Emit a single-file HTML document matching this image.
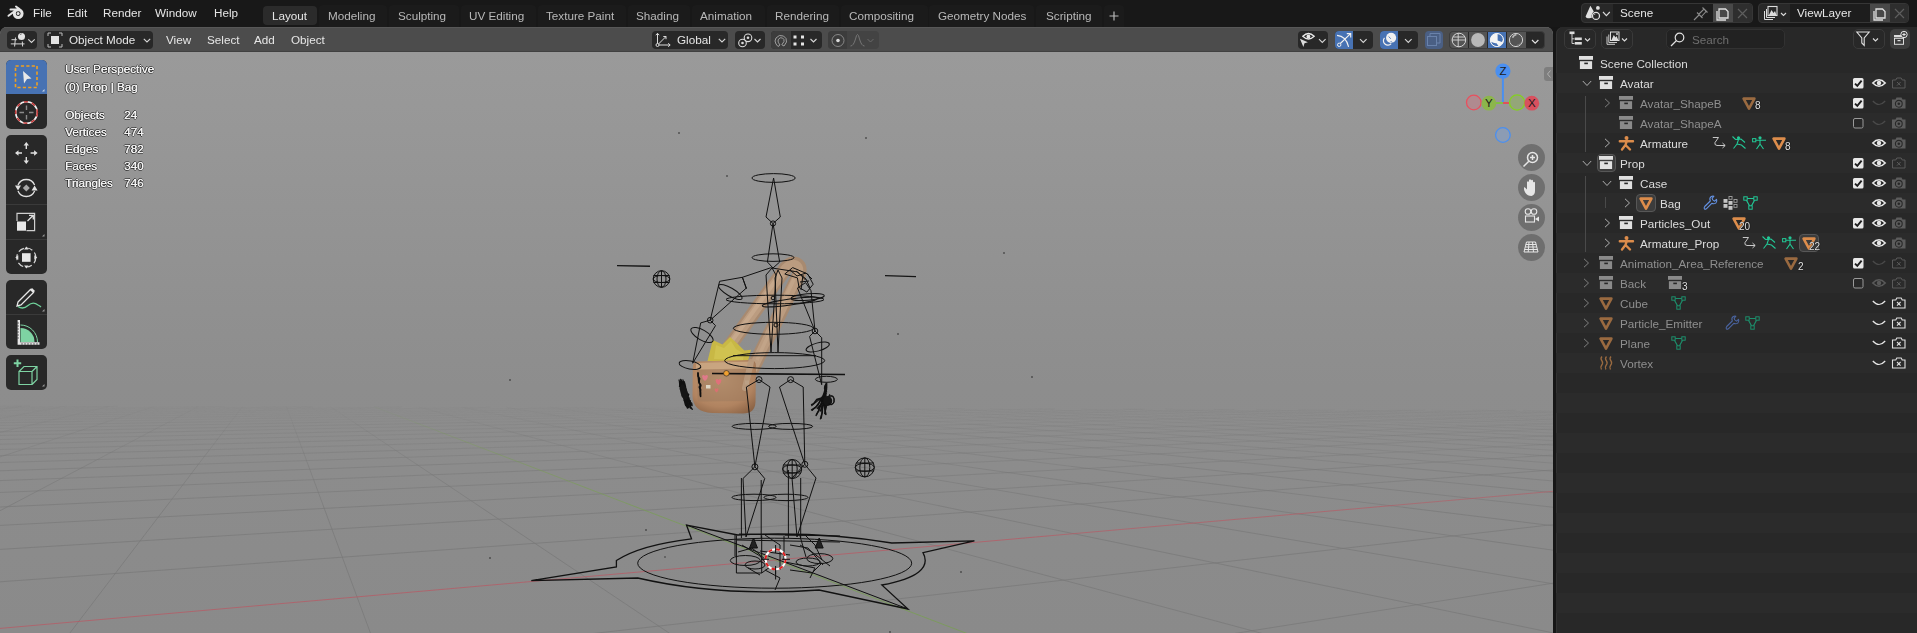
<!DOCTYPE html>
<html><head><meta charset="utf-8">
<style>
*{margin:0;padding:0;box-sizing:border-box}
html,body{width:1917px;height:633px;overflow:hidden;background:#161616;-webkit-font-smoothing:antialiased;font-family:"Liberation Sans",sans-serif;font-size:11.7px;color:#e6e6e6}
.a{position:absolute}
.t{position:absolute;white-space:nowrap;line-height:14px}
svg{position:absolute;overflow:visible}
#vp{position:absolute;left:0;top:27px;width:1553px;height:606px;border-radius:7px 7px 0 0;overflow:hidden;background:linear-gradient(#9b9b9b 0px,#8d8d8d 360px,#8a8a8a 606px)}
#vph{position:absolute;left:0;top:0;width:1553px;height:25px;background:#4c4c4c;border-top:1px solid #575757;border-bottom:1px solid #414141}
#ol{position:absolute;left:1556px;top:27px;width:361px;height:606px;border-radius:7px 0 0 0;overflow:hidden;background:#282828;box-shadow:inset 1px 0 #323232}
.dd{position:absolute;background:#282828;border-radius:4px;height:18px;top:4px}
.tab{position:absolute;top:5px;height:22px;border-radius:4px 4px 0 0;background:#1b1b1b}
.menu{color:#e6e6e6}
.tabt{color:#b8b8b8}
.row{position:absolute;left:0;width:361px;height:20px}
.ot{position:absolute;white-space:nowrap;line-height:14px;color:#dcdcdc}
.dim{color:#8f8f8f}
.vt{position:absolute;white-space:nowrap;line-height:14px;color:#f4f4f4;text-shadow:0.45px 0 .2px #f4f4f4,1px 0 .6px rgba(10,10,10,.6),-1px 0 .6px rgba(10,10,10,.6),0 1px .6px rgba(10,10,10,.6),0 -1px .6px rgba(10,10,10,.6)}
.tb{position:absolute;left:6px;width:41px;background:#282828;border-radius:5px;overflow:hidden}
.nav{position:absolute;left:1517.5px;width:27px;height:27px;border-radius:14px;background:rgba(80,80,80,.55)}
.t,.ot,.vt{will-change:transform}
</style></head><body>
<!-- TOP BAR -->
<div class="a" style="left:0;top:0;width:1917px;height:27px;background:#181818"></div>
<svg style="left:4px;top:2px" width="24" height="22" viewBox="0 0 24 22">
 <circle cx="14.2" cy="11.6" r="3.9" fill="none" stroke="#e4e4e4" stroke-width="3"/>
 <circle cx="14.1" cy="11.6" r="1.5" fill="#e4e4e4"/>
 <path d="M12 4.5 L15.5 7 M6.5 7.5 H14 M4.5 13.8 L10.5 9.2" stroke="#e4e4e4" stroke-width="2" stroke-linecap="round"/>
</svg>
<div class="t menu" style="left:33px;top:6px">File</div>
<div class="t menu" style="left:67px;top:6px">Edit</div>
<div class="t menu" style="left:103px;top:6px">Render</div>
<div class="t menu" style="left:155px;top:6px">Window</div>
<div class="t menu" style="left:214px;top:6px">Help</div>
<div class="tab" style="left:319px;width:68px"></div>
<div class="tab" style="left:389px;width:70px"></div>
<div class="tab" style="left:461px;width:75px"></div>
<div class="tab" style="left:538px;width:88px"></div>
<div class="tab" style="left:628px;width:62px"></div>
<div class="tab" style="left:692px;width:73px"></div>
<div class="tab" style="left:767px;width:72px"></div>
<div class="tab" style="left:841px;width:87px"></div>
<div class="tab" style="left:929px;width:105px"></div>
<div class="tab" style="left:1036px;width:66px"></div>
<div class="tab" style="left:1104px;width:20px"></div>
<div class="tab" style="left:263px;width:54px;top:6px;height:19px;border-radius:4px;background:#2b2b2b"></div>
<div class="t" style="left:272px;top:9px;color:#e6e6e6">Layout</div>
<div class="t tabt" style="left:328px;top:9px">Modeling</div>
<div class="t tabt" style="left:398px;top:9px">Sculpting</div>
<div class="t tabt" style="left:469px;top:9px">UV Editing</div>
<div class="t tabt" style="left:546px;top:9px">Texture Paint</div>
<div class="t tabt" style="left:636px;top:9px">Shading</div>
<div class="t tabt" style="left:700px;top:9px">Animation</div>
<div class="t tabt" style="left:775px;top:9px">Rendering</div>
<div class="t tabt" style="left:849px;top:9px">Compositing</div>
<div class="t tabt" style="left:938px;top:9px">Geometry Nodes</div>
<div class="t tabt" style="left:1046px;top:9px">Scripting</div>
<svg style="left:1109px;top:11px" width="11" height="10"><path d="M5 0.5V9.5M0.5 5H9.5" stroke="#b8b8b8" stroke-width="1.2"/></svg>

<!-- Scene selector -->
<div class="a" style="left:1581px;top:3px;width:172px;height:20px;border-radius:4px;background:#282828;border:1px solid #363636;overflow:hidden">
  <div class="a" style="left:31px;top:0;width:100px;height:18px;background:#1d1d1d"></div>
  <div class="a" style="left:131px;top:0;width:20px;height:18px;background:#494949"></div>
  <div class="a" style="left:151px;top:0;width:21px;height:18px;background:#2e2e2e"></div>
</div>
<svg style="left:1580px;top:2px" width="40" height="22" viewBox="1580 2 40 22">
 <path d="M1590.4 5.8 L1585.6 16.4 Q1586 18.3 1589.5 18.3 L1592.5 17.5 Q1592 13 1593.8 11.5 Z" fill="#e0e0e0"/>
 <circle cx="1596" cy="15.9" r="4.4" fill="#282828"/>
 <circle cx="1596" cy="15.9" r="3.5" fill="none" stroke="#e0e0e0" stroke-width="1.3"/>
 <path d="M1594.3 14.9 L1595.3 13.9" stroke="#d0d0d0" stroke-width="0.9"/>
 <circle cx="1597.9" cy="7.9" r="1.9" fill="#e0e0e0"/>
 <path d="M1603 12 L1606.4 15.6 L1609.8 12" fill="none" stroke="#dcdcdc" stroke-width="1.1"/>
</svg>
<div class="t" style="left:1620px;top:6px;color:#e6e6e6">Scene</div>
<svg style="left:1693px;top:5px" width="17" height="16" viewBox="0 0 17 16">
 <path d="M1 15 L6 10 M4 7.5 L9.5 13 M6 9 L11 4 L13 6.5 L8.5 11.5 M9.5 2.5 L14.5 7.5" fill="none" stroke="#8c8c8c" stroke-width="1.1"/>
</svg>
<svg style="left:1715px;top:6px" width="16" height="15" viewBox="0 0 16 15">
 <path d="M4 3 H10.5 L13 5.5 V12 H4 Z" fill="none" stroke="#e0e0e0" stroke-width="1.3"/>
 <path d="M2 5 V14 H11" fill="none" stroke="#e0e0e0" stroke-width="1.3"/>
</svg>
<svg style="left:1737px;top:8px" width="11" height="11"><path d="M1 1 L10 10 M10 1 L1 10" stroke="#5e5e5e" stroke-width="1.2"/></svg>

<div class="a" style="left:1758px;top:3px;width:151px;height:20px;border-radius:4px;background:#282828;border:1px solid #363636;overflow:hidden">
  <div class="a" style="left:31px;top:0;width:80px;height:18px;background:#1d1d1d"></div>
  <div class="a" style="left:111px;top:0;width:20px;height:18px;background:#494949"></div>
  <div class="a" style="left:131px;top:0;width:20px;height:18px;background:#2e2e2e"></div>
</div>
<svg style="left:1762px;top:5px" width="30" height="17" viewBox="0 0 30 17">
 <rect x="6" y="1.5" width="9" height="9" fill="none" stroke="#dcdcdc" stroke-width="1.1"/>
 <path d="M7 10 L9.5 5 L11.5 8 L13 6 L14.5 10 Z" fill="#dcdcdc"/>
 <path d="M4.5 4 V12.5 H13 M2.5 6 V14.5 H11" fill="none" stroke="#dcdcdc" stroke-width="1"/>
 <path d="M19 8 L21.5 10.5 L24 8" fill="none" stroke="#dcdcdc" stroke-width="1.1"/>
</svg>
<div class="t" style="left:1797px;top:6px;color:#e6e6e6">ViewLayer</div>
<svg style="left:1872px;top:6px" width="16" height="15" viewBox="0 0 16 15">
 <path d="M4 3 H10.5 L13 5.5 V12 H4 Z" fill="none" stroke="#e0e0e0" stroke-width="1.3"/>
 <path d="M2 5 V14 H11" fill="none" stroke="#e0e0e0" stroke-width="1.3"/>
</svg>
<svg style="left:1894px;top:8px" width="11" height="11"><path d="M1 1 L10 10 M10 1 L1 10" stroke="#5e5e5e" stroke-width="1.2"/></svg>
<div id="vp">
<svg style="left:0;top:0" width="1553" height="606" viewBox="0 27 1553 606">
<path d="M-397.3 406.2L-372.6 404.7M-396.4 409.0L-331.8 405.1M-395.4 412.4L-286.5 405.1M-346.6 412.8L-241.3 405.1M-292.2 412.9L-199.8 405.5M-238.0 412.9L-154.7 405.5M-188.2 413.3L-109.7 405.6M-134.1 413.4L-65.0 405.6M-80.2 413.4L-22.6 405.9M-29.4 413.8L22.1 406.0M24.4 413.9L66.6 406.0M77.9 413.9L109.7 406.3M131.2 413.9L154.2 406.4M183.3 414.4L198.5 406.4M236.5 414.4L242.5 406.5M289.4 414.4L286.6 406.8M342.6 414.9L330.6 406.8M448.0 414.9L419.2 407.2M500.3 415.0L463.0 407.3M554.8 415.4L506.6 407.3M607.1 415.4L550.1 407.3M659.0 415.5L595.7 407.7M714.6 415.9L639.1 407.7M766.5 416.0L682.3 407.7M818.1 416.0L728.7 408.1M869.4 416.0L771.9 408.1M926.3 416.5L814.8 408.2M977.6 416.5L857.6 408.2M1028.6 416.5L904.9 408.5M1086.6 417.0L947.6 408.6M1137.5 417.0L990.1 408.6M1188.2 417.0L1038.2 409.0M1238.6 417.1L1080.7 409.0M1297.8 417.5L1123.0 409.0M1348.1 417.5L1165.1 409.1M1398.2 417.6L1214.0 409.4M1458.5 418.0L1256.1 409.4M1508.5 418.0L1298.0 409.5M1558.2 418.1L1347.6 409.8M1607.7 418.1L1389.5 409.9M1669.2 418.6L1431.1 409.9M1718.6 418.6L1472.6 409.9M1767.7 418.6L1523.1 410.3M1830.4 419.1L1564.5 410.3M1879.4 419.1L1605.8 410.3M1928.2 419.1L1657.1 410.7M1976.7 419.1L1698.3 410.7M1994.5 418.3L1739.2 410.8M1996.9 417.0L1780.1 410.8M1999.1 415.8L1832.2 411.2M1987.5 414.3L1873.0 411.2M1989.9 413.2L1913.6 411.2M1992.1 412.2L1966.5 411.6M1912.3 419.1L1997.8 415.2M1803.2 418.7L1977.8 411.6M1684.8 418.7L1886.6 411.2M1575.7 418.3L1795.6 410.9M1467.0 417.9L1705.0 410.6M1358.7 417.5L1606.1 410.5M1237.6 417.4L1515.4 410.2M1129.3 417.0L1425.1 409.9M1021.5 416.6L1335.1 409.6M914.1 416.2L1234.2 409.5M790.2 416.2L1144.2 409.2M682.8 415.8L1054.5 408.8M575.8 415.4L965.0 408.5M469.2 415.0L862.3 408.4M363.1 414.6L772.8 408.1M236.0 414.5L683.7 407.8M129.9 414.1L594.8 407.5M24.2 413.7L490.2 407.4M-81.0 413.3L401.3 407.1M-210.9 413.3L312.8 406.8M-316.1 412.9L224.6 406.5M-394.3 412.2L117.9 406.4M-392.5 410.6L29.7 406.0M-390.9 409.2L-58.2 405.7M-389.3 407.9L-145.9 405.4M-387.8 406.6L-254.4 405.3M-386.4 405.4L-342.0 405.0" stroke="#777777" stroke-opacity="0.07" stroke-width="1" fill="none"/>
<path d="M-394.2 416.3L-346.6 412.8M-385.9 420.3L-292.2 412.9M-322.5 420.4L-238.0 412.9M-259.4 420.4L-188.2 413.3M-196.7 420.4L-134.1 413.4M-138.7 421.0L-80.2 413.4M-76.1 421.0L-29.4 413.8M-13.8 421.0L24.4 413.9M45.7 421.6L77.9 413.9M107.8 421.6L131.2 413.9M169.6 421.6L183.3 414.4M231.0 421.6L236.5 414.4M292.3 422.2L289.4 414.4M353.6 422.2L342.6 414.9M477.2 422.8L448.0 414.9M538.1 422.8L500.3 415.0M598.6 422.8L554.8 415.4M658.7 422.8L607.1 415.4M723.2 423.4L659.0 415.5M783.2 423.4L714.6 415.9M842.9 423.4L766.5 416.0M908.8 424.0L818.1 416.0M968.3 424.0L869.4 416.0M1027.6 424.0L926.3 416.5M1086.4 424.0L977.6 416.5M1154.0 424.6L1028.6 416.5M1212.8 424.6L1086.6 417.0M1271.2 424.6L1137.5 417.0M1340.2 425.2L1188.2 417.0M1398.5 425.2L1238.6 417.1M1456.5 425.2L1297.8 417.5M1514.1 425.2L1348.1 417.5M1584.9 425.8L1398.2 417.6M1642.3 425.8L1458.5 418.0M1699.5 425.8L1508.5 418.0M1771.7 426.4L1558.2 418.1M1828.7 426.4L1607.7 418.1M1885.4 426.4L1669.2 418.6M1941.8 426.4L1718.6 418.6M1997.8 426.4L1767.7 418.6M1983.5 424.1L1830.4 419.1M1986.5 422.5L1879.4 419.1M1989.3 421.0L1928.2 419.1M1992.0 419.6L1976.7 419.1M1884.8 426.7L1993.2 421.0M1757.8 426.2L1912.3 419.1M1631.5 425.7L1803.2 418.7M1505.8 425.2L1684.8 418.7M1366.4 425.2L1575.7 418.3M1240.7 424.8L1467.0 417.9M1115.5 424.3L1358.7 417.5M990.9 423.8L1237.6 417.4M847.9 423.8L1129.3 417.0M723.3 423.3L1021.5 416.6M599.3 422.8L914.1 416.2M475.9 422.4L790.2 416.2M329.0 422.3L682.8 415.8M205.6 421.9L575.8 415.4M82.8 421.4L469.2 415.0M-39.5 420.9L363.1 414.6M-190.0 420.9L236.0 414.5M-312.3 420.4L129.9 414.1M-372.5 419.1L24.2 413.7M-371.3 417.1L-81.0 413.3M-398.3 415.6L-210.9 413.3M-396.2 413.8L-316.1 412.9" stroke="#777777" stroke-opacity="0.14" stroke-width="1" fill="none"/>
<path d="M-399.8 421.5L-385.9 420.3M-398.8 427.1L-322.5 420.4M-341.7 428.5L-259.4 420.4M-269.1 428.5L-196.7 420.4M-197.0 428.5L-138.7 421.0M-130.1 429.2L-76.1 421.0M-58.0 429.2L-13.8 421.0M13.5 429.2L45.7 421.6M84.5 429.2L107.8 421.6M153.7 429.9L169.6 421.6M224.7 429.9L231.0 421.6M295.1 429.9L292.3 422.2M366.2 430.6L353.6 422.2M506.4 430.6L477.2 422.8M575.8 430.6L538.1 422.8M649.2 431.3L598.6 422.8M718.4 431.3L658.7 422.8M787.2 431.3L723.2 423.4M862.5 432.0L783.2 423.4M931.1 432.0L842.9 423.4M999.3 432.0L908.8 424.0M1067.0 432.0L968.3 424.0M1144.6 432.7L1027.6 424.0M1212.1 432.7L1086.4 424.0M1279.2 432.7L1154.0 424.6M1358.7 433.4L1212.8 424.6M1425.7 433.4L1271.2 424.6M1492.2 433.4L1340.2 425.2M1558.2 433.4L1398.5 425.2M1639.9 434.1L1456.5 425.2M1705.8 434.1L1514.1 425.2M1771.2 434.1L1584.9 425.8M1854.9 434.8L1642.3 425.8M1920.2 434.8L1699.5 425.8M1985.0 434.8L1771.7 426.4M1988.5 432.5L1828.7 426.4M1991.8 430.3L1885.4 426.4M1994.9 428.3L1941.8 426.4M1890.9 434.5L1995.6 428.2M1745.8 434.0L1884.8 426.7M1587.5 434.0L1757.8 426.2M1442.4 433.5L1631.5 425.7M1298.0 432.9L1505.8 425.2M1154.3 432.3L1366.4 425.2M991.1 432.4L1240.7 424.8M847.5 431.8L1115.5 424.3M704.7 431.2L990.9 423.8M562.6 430.7L847.9 423.8M394.4 430.7L723.3 423.3M252.4 430.1L599.3 422.8M111.1 429.6L475.9 422.4M-29.5 429.0L329.0 422.3M-202.6 429.0L205.6 421.9M-343.1 428.5L82.8 421.4M-376.8 426.2L-39.5 420.9M-375.3 423.7L-190.0 420.9M-373.8 421.3L-312.3 420.4" stroke="#777777" stroke-opacity="0.21" stroke-width="1" fill="none"/>
<path d="M-397.6 434.1L-341.7 428.5M-350.4 437.7L-269.1 428.5M-267.2 437.6L-197.0 428.5M-190.8 438.5L-130.1 429.2M-107.7 438.5L-58.0 429.2M-25.3 438.4L13.5 429.2M56.5 438.4L84.5 429.2M135.9 439.3L153.7 429.9M217.5 439.3L224.7 429.9M298.6 439.2L295.1 429.9M380.4 440.1L366.2 430.6M541.6 440.0L506.4 430.6M621.2 440.0L575.8 430.6M706.0 440.9L649.2 431.3M785.5 440.9L718.4 431.3M864.3 440.8L787.2 431.3M951.7 441.8L862.5 432.0M1030.3 441.7L931.1 432.0M1108.3 441.6L999.3 432.0M1185.7 441.6L1067.0 432.0M1276.1 442.5L1144.6 432.7M1353.3 442.5L1212.1 432.7M1429.9 442.4L1279.2 432.7M1522.9 443.4L1358.7 433.4M1599.3 443.3L1425.7 433.4M1675.1 443.2L1492.2 433.4M1750.3 443.2L1558.2 433.4M1846.2 444.1L1639.9 434.1M1921.2 444.1L1705.8 434.1M1995.5 444.0L1771.2 434.1M1999.2 441.0L1854.9 434.8M1981.1 437.3L1920.2 434.8M1911.4 444.2L1998.8 437.9M1743.9 443.5L1890.9 434.5M1577.5 442.8L1745.8 434.0M1393.8 442.9L1587.5 434.0M1227.3 442.3L1442.4 433.5M1061.9 441.6L1298.0 432.9M897.6 440.9L1154.3 432.3M707.3 441.0L991.1 432.4M542.9 440.3L847.5 431.8M379.5 439.7L704.7 431.2M217.2 439.0L562.6 430.7M20.3 439.1L394.4 430.7M-142.0 438.4L252.4 430.1M-303.3 437.8L111.1 429.6M-382.5 435.6L-29.5 429.0M-380.4 432.2L-202.6 429.0M-378.5 429.1L-343.1 428.5" stroke="#777777" stroke-opacity="0.28" stroke-width="1" fill="none"/>
<path d="M-396.0 442.8L-350.4 437.7M-352.1 448.6L-267.2 437.6M-256.2 448.5L-190.8 438.5M-168.0 449.7L-107.7 438.5M-72.2 449.6L-25.3 438.4M22.7 449.5L56.5 438.4M116.7 449.4L135.9 439.3M208.9 450.6L217.5 439.3M302.8 450.5L298.6 439.2M395.7 450.4L380.4 440.1M584.1 451.5L541.6 440.0M676.0 451.3L621.2 440.0M767.1 451.2L706.0 440.9M866.7 452.4L785.5 440.9M957.5 452.3L864.3 440.8M1047.6 452.2L951.7 441.8M1150.5 453.4L1030.3 441.7M1240.3 453.3L1108.3 441.6M1329.3 453.2L1185.7 441.6M1417.5 453.1L1276.1 442.5M1524.3 454.3L1353.3 442.5M1612.2 454.2L1429.9 442.4M1699.3 454.0L1522.9 443.4M1809.7 455.3L1599.3 443.3M1896.5 455.1L1675.1 443.2M1982.5 455.0L1750.3 443.2M1987.3 451.0L1846.2 444.1M1991.6 447.3L1921.2 444.1M1773.8 454.1L1911.4 444.2M1564.3 454.4L1743.9 443.5M1372.1 453.5L1577.5 442.8M1181.2 452.7L1393.8 442.9M991.6 451.9L1227.3 442.3M773.4 452.2L1061.9 441.6M583.9 451.4L897.6 440.9M395.7 450.5L707.3 441.0M208.9 449.7L542.9 440.3M-18.0 450.0L379.5 439.7M-204.8 449.2L217.2 439.0M-390.2 448.3L20.3 439.1M-387.4 443.6L-142.0 438.4M-384.8 439.4L-303.3 437.8" stroke="#777777" stroke-opacity="0.35" stroke-width="1" fill="none"/>
<path d="M-394.0 454.1L-352.1 448.6M-342.9 461.8L-256.2 448.5M-231.9 461.6L-168.0 449.7M-129.2 463.2L-72.2 449.6M-18.4 463.0L22.7 449.5M91.3 462.8L116.7 449.4M198.4 464.3L208.9 450.6M307.8 464.1L302.8 450.5M416.0 463.9L395.7 450.4M635.7 465.3L584.1 451.5M742.5 465.1L676.0 451.3M848.2 464.9L767.1 451.2M965.3 466.5L866.7 452.4M1070.7 466.3L957.5 452.3M1174.9 466.1L1047.6 452.2M1278.1 465.9L1150.5 453.4M1400.6 467.5L1240.3 453.3M1503.4 467.3L1329.3 453.2M1605.1 467.0L1417.5 453.1M1732.2 468.7L1524.3 454.3M1833.5 468.4L1612.2 454.2M1933.7 468.2L1699.3 454.0M1971.3 464.5L1809.7 455.3M1977.2 459.5L1896.5 455.1M1590.2 467.3L1773.8 454.1M1368.3 466.3L1564.3 454.4M1119.0 466.8L1372.1 453.5M897.1 465.8L1181.2 452.7M677.0 464.8L991.6 451.9M458.7 463.8L773.4 452.2M197.7 464.2L583.9 451.4M-20.6 463.2L395.7 450.5M-237.0 462.2L208.9 449.7M-397.2 459.8L-18.0 450.0M-393.5 453.7L-204.8 449.2" stroke="#777777" stroke-opacity="0.42" stroke-width="1" fill="none"/>
<path d="M-391.4 469.2L-342.9 461.8M-330.3 480.0L-231.9 461.6M-198.4 479.6L-129.2 463.2M-68.2 479.3L-18.4 463.0M55.8 481.4L91.3 462.8M185.7 481.1L198.4 464.3M314.0 480.7L307.8 464.1M440.7 480.4L416.0 463.9M698.5 482.2L635.7 465.3M823.2 481.8L742.5 465.1M961.1 483.9L848.2 464.9M1085.3 483.6L965.3 466.5M1208.0 483.2L1070.7 466.3M1329.3 482.9L1174.9 466.1M1474.6 485.0L1278.1 465.9M1595.3 484.7L1400.6 467.5M1714.5 484.3L1503.4 467.3M1866.2 486.5L1605.1 467.0M1984.8 486.1L1732.2 468.7M1991.1 478.6L1833.5 468.4M1996.7 472.0L1933.7 468.2M1890.8 486.2L1995.3 474.4M1363.1 483.7L1590.2 467.3M1103.1 482.4L1368.3 466.3M805.2 483.2L1119.0 466.8M545.2 481.9L897.1 465.8M287.7 480.7L677.0 464.8M32.7 479.4L458.7 463.8M-281.5 480.2L197.7 464.2M-345.1 473.1L-20.6 463.2M-344.8 465.2L-237.0 462.2" stroke="#777777" stroke-opacity="0.49" stroke-width="1" fill="none"/>
<path d="M-387.6 490.6L-330.3 480.0M-296.6 503.0L-198.4 479.6M-138.6 502.4L-68.2 479.3M17.0 501.8L55.8 481.4M170.3 501.3L185.7 481.1M322.7 504.2L314.0 480.7M475.4 503.6L440.7 480.4M787.4 506.0L698.5 482.2M937.3 505.4L823.2 481.8M1084.9 504.8L961.1 483.9M1230.5 504.3L1085.3 483.6M1402.5 507.2L1208.0 483.2M1547.3 506.6L1329.3 482.9M1689.9 506.0L1474.6 485.0M1871.1 509.1L1595.3 484.7M1969.1 504.9L1714.5 484.3M1977.6 494.8L1866.2 486.5M1705.3 507.3L1890.8 486.2M1038.1 507.1L1363.1 483.7M724.2 505.4L1103.1 482.4M413.9 503.7L805.2 483.2M107.2 502.1L545.2 481.9M-269.5 503.5L287.7 480.7M-346.0 493.3L32.7 479.4M-345.5 482.4L-281.5 480.2" stroke="#777777" stroke-opacity="0.56" stroke-width="1" fill="none"/>
<path d="M-381.8 523.2L-296.6 503.0M-229.5 532.2L-138.6 502.4M-39.0 531.2L17.0 501.8M144.2 535.5L170.3 501.3M333.9 534.5L322.7 504.2M520.2 533.5L475.4 503.6M902.4 536.9L787.4 506.0M1084.3 535.9L937.3 505.4M1263.1 534.9L1084.9 504.8M1476.0 539.2L1230.5 504.3M1653.6 538.2L1402.5 507.2M1828.0 537.2L1547.3 506.6M1999.3 536.2L1689.9 506.0M1959.1 516.8L1871.1 509.1M1823.4 540.5L1980.5 515.7M1433.1 538.2L1705.3 507.3M668.9 533.7L1038.1 507.1M219.0 536.1L724.2 505.4M-160.2 533.8L413.9 503.7M-347.4 523.0L107.2 502.1M-346.6 506.6L-269.5 503.5" stroke="#777777" stroke-opacity="0.63" stroke-width="1" fill="none"/>
<path d="M-399.1 587.8L-229.5 532.2M-351.2 695.4L-39.0 531.2M26.0 690.6L144.2 535.5M390.1 686.1L333.9 534.5M741.8 681.6L520.2 533.5M1480.0 691.9L902.4 536.9M1728.5 669.2L1084.3 535.9M1859.4 635.5L1263.1 534.9M1963.5 608.7L1476.0 539.2M1978.5 578.3L1653.6 538.2M1990.0 554.9L1828.0 537.2M1632.9 693.8L1982.7 603.8M893.2 687.4L1823.4 540.5M16.9 698.9L1433.1 538.2M-351.2 607.1L668.9 533.7M-349.5 570.6L219.0 536.1M-348.3 543.6L-160.2 533.8" stroke="#777777" stroke-opacity="0.70" stroke-width="1" fill="none"/>
<path d="M395.5 414.9L374.5 406.9" stroke="#78a050" stroke-opacity="0.08" stroke-width="1" fill="none"/>
<path d="M414.5 422.2L395.5 414.9" stroke="#78a050" stroke-opacity="0.15" stroke-width="1" fill="none"/>
<path d="M436.6 430.6L414.5 422.2" stroke="#78a050" stroke-opacity="0.22" stroke-width="1" fill="none"/>
<path d="M461.3 440.1L436.6 430.6" stroke="#78a050" stroke-opacity="0.30" stroke-width="1" fill="none"/>
<path d="M491.3 451.6L461.3 440.1" stroke="#78a050" stroke-opacity="0.38" stroke-width="1" fill="none"/>
<path d="M523.2 463.7L491.3 451.6" stroke="#78a050" stroke-opacity="0.45" stroke-width="1" fill="none"/>
<path d="M572.2 482.5L523.2 463.7" stroke="#78a050" stroke-opacity="0.52" stroke-width="1" fill="none"/>
<path d="M625.9 503.1L572.2 482.5" stroke="#78a050" stroke-opacity="0.60" stroke-width="1" fill="none"/>
<path d="M717.0 537.9L625.9 503.1" stroke="#78a050" stroke-opacity="0.68" stroke-width="1" fill="none"/>
<path d="M1132.0 696.6L717.0 537.9" stroke="#78a050" stroke-opacity="0.75" stroke-width="1" fill="none"/>
<path d="M1966.0 454.9L1991.4 452.7" stroke="#b85a64" stroke-opacity="0.38" stroke-width="1" fill="none"/>
<path d="M1814.0 468.3L1966.0 454.9" stroke="#b85a64" stroke-opacity="0.45" stroke-width="1" fill="none"/>
<path d="M1625.7 484.9L1814.0 468.3" stroke="#b85a64" stroke-opacity="0.52" stroke-width="1" fill="none"/>
<path d="M1391.3 505.6L1625.7 484.9" stroke="#b85a64" stroke-opacity="0.60" stroke-width="1" fill="none"/>
<path d="M1048.3 535.9L1391.3 505.6" stroke="#b85a64" stroke-opacity="0.68" stroke-width="1" fill="none"/>
<path d="M-353.5 659.6L1048.3 535.9" stroke="#b85a64" stroke-opacity="0.75" stroke-width="1" fill="none"/>
</svg>
<svg style="left:0;top:0" width="1553" height="606" viewBox="0 27 1553 606">
<defs>
 <linearGradient id="strap" x1="0" y1="0" x2="1" y2="0">
  <stop offset="0" stop-color="#a98462"/><stop offset=".5" stop-color="#d8b08c"/><stop offset="1" stop-color="#b08866"/>
 </linearGradient>
 <radialGradient id="bagg" cx=".45" cy=".35" r=".75">
  <stop offset="0" stop-color="#c9a07a"/><stop offset=".7" stop-color="#b08360"/><stop offset="1" stop-color="#8c6446"/>
 </radialGradient>
</defs>
<!-- bag strap (U loop) -->
<path d="M724 354 L783 272 Q789 262 796 264 Q801.5 267 798.5 276 L752 370" fill="none" stroke="#a88a70" stroke-width="14" stroke-linecap="round" stroke-linejoin="round"/>
<path d="M724 354 L783 272 Q789 263 795.5 265 Q800 267.5 797.8 276 L752 370" fill="none" stroke="#bb9c80" stroke-width="9.5" stroke-linecap="round" stroke-linejoin="round"/>
<path d="M729 345 L781 273" stroke="#ccae92" stroke-width="4" opacity=".7"/>
<path d="M794 279 L757 360" stroke="#c8aa8e" stroke-width="3.5" opacity=".6"/>
<!-- yellow cloth -->
<path d="M707.5 361 L712.8 340 L722.5 344.5 L730 337 L737.5 343.8 L744.3 350.5 L751 349.8 L748 361 Z" fill="#c8b845"/>
<path d="M714 359 L716 345 L724 348 L731 341 L736 349 L744 354 L743 360 Z" fill="#d6c858" opacity=".6"/>
<!-- bag body -->
<path d="M697 361.5 L750 360 Q756 360 756 366 L755.5 402 Q755 413.5 743 413.5 L712 413 Q693 412 692.5 396 L692.8 367 Q693 361.8 697 361.5 Z" fill="url(#bagg)"/>
<path d="M696 363 L753 361.5 L753 368.5 L696 370 Z" fill="#ccaa86" opacity=".8"/>
<path d="M697 369.5 L748 368.5 L747.5 399 Q747 401 744 401 L700 401.5 Q697.5 401.5 697.5 398 Z" fill="#9c7a5e" opacity=".5"/>
<path d="M702 376 q1.5 -2 3 0 q1.5 -2 3 0 q0 2.5 -3 5 q-3 -2.5 -3 -5 Z" fill="#e07a8a"/>
<path d="M715.5 380 q1.5 -2 3 0 q1.5 -2 3 0 q0 2.5 -3 5 q-3 -2.5 -3 -5 Z" fill="#e0707a"/>
<path d="M714.5 389 q1 -1.5 2 0 q1 -1.5 2 0 q0 2 -2 3.5 q-2 -1.5 -2 -3.5 Z" fill="#d87070"/>
<rect x="706" y="385" width="4.5" height="3.5" fill="#ddd6c4"/>
<rect x="745" y="380.5" width="4" height="4" fill="#e0dccc"/>
<path d="M751 362 L745 388" stroke="#b89a7e" stroke-width="6" stroke-linecap="round" opacity=".9"/>
<g fill="none" stroke="#111" stroke-width="1">
 <!-- head -->
 <ellipse cx="773.6" cy="178" rx="21.6" ry="4.4"/>
 <path d="M773.6 178 L766 217 L773 223.5 L780.3 217 Z"/>
 <circle cx="773" cy="223.5" r="2.6"/>
 <path d="M773 223.5 L767.4 262 L773 268 L779.7 262 Z"/>
 <ellipse cx="773" cy="257.6" rx="20.9" ry="3.8"/>
 <!-- spine bones -->
 <path d="M772 268 L766 275 L771 352 L776 275 Z"/>
 <path d="M778 270 L775 278 L778 352 L782 278 Z"/>
 <circle cx="773" cy="298" r="1.8"/><circle cx="776" cy="325" r="2"/>
 <!-- torso ellipses -->
 <ellipse cx="775" cy="299.5" rx="49" ry="4.3"/>
 <ellipse cx="790" cy="302" rx="28" ry="3" transform="rotate(-8 790 302)"/>
 <ellipse cx="773.3" cy="328.3" rx="40" ry="6"/>
 <ellipse cx="774.7" cy="360.6" rx="50" ry="8"/>
 <path d="M733 355.7 L816 355.7"/>
 <ellipse cx="807.7" cy="297" rx="16.6" ry="3.2" transform="rotate(-5 807.7 297)"/>
 <path d="M712 373.5 L845 374.5" stroke-width="1.6"/>
 <!-- shoulders -->
 <path d="M770.6 267.8 L742.4 277.3 L746.4 289"/>
 <path d="M742.4 277.3 L719.6 281.3 L710.2 320.2 L746.4 288 Z"/>
 <ellipse cx="730.3" cy="292" rx="13.4" ry="4" transform="rotate(30 730.3 292)"/>
 <circle cx="710.2" cy="320.2" r="2.8"/>
 <path d="M710.2 320.2 L700.7 322.9 L692.7 363.2 L715.5 325.6 Z"/>
 <ellipse cx="702" cy="335" rx="12.5" ry="5" transform="rotate(30 702 335)"/>
 <ellipse cx="690" cy="365" rx="11" ry="4" transform="rotate(10 690 365)"/>
 <path d="M770.6 267.8 L797.5 271.9 L805.6 280 M790 270 L797 276 L806 273 L812 279"/>
 <path d="M805.6 282.6 L797.5 288 L815 331 L811 290.7 Z"/>
 <path d="M784.8 274 L792.7 267.6 L807.7 274 L813.2 284.2 L806.9 292.1 L799 287.4 L797.4 277.9 Z M796 271 L806 279 L810 288 M800 282 L809 281 M803 275 L801 290"/>
 <circle cx="815" cy="331" r="2.8"/>
 <path d="M815 331 L809.6 336.4 L821.7 384.7 L821.7 337.7 Z"/>
 <ellipse cx="817.7" cy="347" rx="12" ry="4" transform="rotate(-15 817.7 347)"/>
 <ellipse cx="826.4" cy="379.3" rx="11" ry="3"/>
 <!-- legs -->
 <circle cx="759" cy="379.6" r="3"/><circle cx="790.6" cy="379.6" r="3"/>
 <path d="M759 379.6 L746.4 387 L754.9 466.8 L770 387 Z"/>
 <path d="M790.6 379.6 L779.5 387 L804.8 464.3 L803.2 387 Z"/>
 <ellipse cx="754.2" cy="426.4" rx="22" ry="3"/>
 <ellipse cx="790.6" cy="426.4" rx="22" ry="3"/>
 <circle cx="754.9" cy="466.8" r="3"/><circle cx="804.8" cy="464.3" r="3"/>
 <path d="M754.9 466.8 L743 478.5 L746 537 L764.7 478.5 Z"/>
 <path d="M804.8 464.3 L792 478 L797 537 L816 478 Z"/>
 <ellipse cx="754" cy="497.4" rx="22" ry="3.2"/>
 <path d="M741.4 478 V538 M761.2 480 V538 M788.4 470 V538 M800.7 478 V538"/>
 <ellipse cx="786" cy="497.4" rx="22" ry="3.2"/>
 <!-- spheres -->
 <circle cx="661.5" cy="279" r="8.3"/><ellipse cx="661.5" cy="279" rx="4.5" ry="8.3"/><ellipse cx="661.5" cy="279" rx="8.3" ry="3.5"/><path d="M661.5 270.7 V287.3 M653.5 275.5 H669.5 M653.5 282.5 H669.5"/>
 <circle cx="792.2" cy="469" r="9.5"/><ellipse cx="792.2" cy="469" rx="5" ry="9.5"/><ellipse cx="792.2" cy="469" rx="9.5" ry="4"/><path d="M792.2 459.5 V478.5 M783 465 H801 M783 473 H801"/>
 <circle cx="864.8" cy="467.4" r="9.5"/><ellipse cx="864.8" cy="467.4" rx="5" ry="9.5"/><ellipse cx="864.8" cy="467.4" rx="9.5" ry="4"/><path d="M864.8 458 V477 M856 463 H874 M856 471 H874"/>
 <!-- feet -->
 <path d="M739 534 L840 536 M737 540 L840 542"/>
 <path d="M736.4 535.3 V573 H761.7 V535.3 M761.7 573 L770 567 M765 535 L780 545 V570"/>
 <path d="M785 535 H805 L815 545 L822 560 M790 545 L808 548 L823 565"/>
 <ellipse cx="745.3" cy="560.5" rx="15" ry="5"/>
 <ellipse cx="755" cy="565" rx="10" ry="4"/>
 <ellipse cx="819.8" cy="558.6" rx="13" ry="5"/>
 <ellipse cx="808" cy="562" rx="12" ry="4"/>
 <path d="M760 551 L790 555 M785 562 L815 568 L810 578 M765 570 L780 578 L775 590 M775.6 569 V579.5 M742 545 L760 556 L770 568 M800 545 L812 552 L830 566 M738 552 L752 548 L766 560 M790 570 L812 573 L822 563 M748 568 L760 575 M735 535 V556 M784 536 V560 M800 536 L806 557"/>
 <path d="M753.5 538 L749.5 548 H757.5 Z M819.2 538 L815.2 548 H823.2 Z" fill="#222"/>
 <!-- root star -->
 <ellipse cx="774.7" cy="563.2" rx="137" ry="25"/>
 <path d="M531.3 580.6 L616.4 567 L616.4 560.5 Q640 545 691.5 538.8 L686.5 525 L737.8 535 Q820 531 891.8 543 L974.4 540.8 L923 552.6 Q935 575 881.8 585 L908 609 L819 590 Q720 597 637.7 578 Z" stroke-width="1.3"/>
 <path d="M686.5 525 L908 609"/>
 <!-- dashes -->
 
</g>
<!-- hands scribbles -->
<g fill="none" stroke="#121212" stroke-linecap="round">
<path d="M681.7 382.4L682.7 383.9L683.3 387.5L684.9 388.4L684.3 390.8L686.5 394.9L685.5 398.1L689.2 399.6L689.4 400.6L688.9 404.0L690.2 405.5M680.5 379.2L681.3 382.3L682.1 385.0L682.7 386.7L685.0 391.4L685.4 393.3L684.6 394.6L685.2 396.9L687.2 400.5L688.0 403.2L689.0 407.2M679.0 380.3L680.1 381.7L682.2 386.3L682.6 386.9L684.2 392.0L686.8 392.2L686.4 394.8L686.9 399.4L688.3 401.3L690.1 402.9L691.9 405.3M682.9 379.7L684.2 383.1L682.4 385.8L682.3 387.0L684.1 390.2L682.1 393.8L683.2 394.2L685.6 397.0L685.1 398.8L685.4 402.8L686.6 405.3M681.2 381.7L683.2 383.3L682.1 387.8L684.8 388.4L684.0 392.3L687.0 393.2L688.2 397.6L688.4 398.8L688.2 400.2L691.8 403.2L692.2 405.7M683.9 382.6L683.0 384.0L684.5 388.0L684.9 388.7L686.0 390.7L683.7 393.1L685.1 394.7L684.6 397.8L686.0 399.4L685.7 403.7L687.7 405.3M683.1 382.5L683.9 385.2L683.7 385.5L682.4 389.0L682.2 390.7L682.6 392.2L682.1 396.2L683.9 398.3L684.1 400.7L685.5 401.6L685.6 405.3M684.2 381.5L685.0 383.9L685.4 387.2L684.5 389.9L687.5 393.3L687.2 394.6L688.0 397.8L687.9 401.2L687.7 403.7L688.3 405.9L690.3 407.6M683.2 382.0L682.0 384.1L684.0 386.5L682.8 391.1L684.3 392.5L685.2 394.8L685.5 397.1L685.8 401.5L688.1 404.3L687.6 406.2L688.4 407.6M682.0 384.0L682.4 385.4L683.9 388.1L684.3 390.8L686.5 393.4L686.7 396.7L689.3 398.0L687.4 399.2L690.4 401.6L690.7 405.4L690.3 408.4M679.1 379.8L679.3 381.2L679.7 385.0L681.7 387.5L683.2 390.4L685.0 392.5L683.6 394.3L684.4 395.5L686.0 399.9L686.0 401.1L687.2 404.7M682.1 382.7L684.1 383.9L685.0 388.0L683.6 389.5L685.8 393.1L685.9 394.5L688.1 397.5L689.0 398.9L689.0 400.5L689.9 404.5L690.4 406.6" stroke-width="1.1"/>
<path d="M698.0 373.0L697.9 376.1L699.7 378.7L699.3 380.7L699.3 383.3L700.6 384.7L699.2 387.1L700.1 389.9L700.0 390.8L700.6 393.0L700.5 395.4" stroke-width="1.4"/>
<path d="M826.5 383.3L825.8 386.5L825.1 387.6L825.6 391.4L826.0 393.9L826.0 396.0L823.2 397.0L818.8 399.8L816.1 402.1L814.1 403.6L811.8 405.5M826.5 383.3L825.8 385.6L826.7 389.3L825.0 391.7L826.3 393.5L825.2 395.3L822.5 398.9L820.1 400.7L818.4 404.7L814.5 408.2L812.3 410.4M826.5 383.3L826.6 384.9L826.0 388.2L826.6 391.9L824.8 393.4L824.2 395.9L823.9 400.8L821.3 403.4L818.9 407.9L818.7 410.7L816.6 414.4M826.5 383.3L825.5 385.2L826.3 388.0L825.3 391.2L824.4 394.0L824.2 396.0L823.7 399.9L823.5 404.9L822.3 409.4L821.9 413.4L820.3 419.0M826.5 383.3L826.5 385.9L826.7 388.6L826.4 390.3L825.8 394.1L825.9 395.6L824.8 400.7L824.8 404.7L826.5 406.6L825.2 411.7L825.5 414.1M828.7 396.5L827.0 400.5L824.7 402.8L824.9 408.0M829.7 394.7L826.9 400.9L823.2 405.2L820.1 411.0M826.4 397.1L824.1 399.7L824.2 405.0L822.8 406.2M822.5 399.7L821.4 403.8L821.2 407.8L820.8 410.9M827.6 399.1L824.7 402.4L819.9 405.3L817.2 408.5M829.1 398.8L827.6 403.3L825.6 408.2L824.6 413.6" stroke-width="1.2"/>
<path d="M829 396 Q835 395 834 402 Q832 406 828 404" stroke-width="1"/>
</g>
<!-- dashes -->
 
</g>
<!-- hands scribbles -->
<g fill="none" stroke="#101010" stroke-linecap="round">
<path d="M681.6 380.8L682.3 382.3L683.8 385.0L684.6 387.9L684.7 391.8L687.9 393.8L687.1 398.1L690.2 400.8L689.6 404.8M680.2 384.3L680.2 387.7L680.4 389.4L682.3 391.2L682.6 392.7L682.5 395.6L685.6 398.6L685.9 401.5L687.6 403.1M684.0 383.5L685.6 387.0L684.3 390.5L684.2 391.6L686.6 393.6L686.2 396.1L687.1 401.1L687.3 404.2L686.9 406.5M683.0 382.9L684.1 386.4L684.0 389.6L686.9 393.5L688.6 394.4L687.6 398.6L686.8 401.0L687.5 403.0L687.4 408.0M680.6 381.2L681.0 384.7L682.9 388.7L683.4 390.4L682.6 393.9L685.4 398.9L684.5 399.9L686.2 403.3L688.3 407.6M681.3 380.0L683.6 383.7L683.3 386.6L684.7 388.0L686.4 393.3L687.1 396.4L686.5 398.3L686.5 402.1L687.2 403.5M681.0 380.8L680.4 382.4L681.4 385.0L683.3 389.6L681.5 391.3L683.5 394.4L684.2 398.7L688.1 400.4L688.0 402.0M680.5 381.7L679.6 386.2L681.7 387.0L682.3 389.8L682.8 395.9L685.0 398.2L684.4 400.4L685.4 404.8L687.7 408.0M681.6 381.1L684.1 385.4L685.4 387.0L686.2 390.7L686.3 393.1L687.8 397.1L689.8 402.6L689.9 405.9L692.3 409.3" stroke-width="1.4"/>
<path d="M698.0 373.0L698.2 375.4L698.5 378.4L698.9 382.2L700.8 385.7L700.0 388.1L700.6 389.7L700.3 394.1L700.6 396.5" stroke-width="1.6"/>
<ellipse cx="684" cy="392" rx="3.5" ry="8" transform="rotate(-15 684 392)" fill="#151515" stroke="none"/>
<path d="M826.5 383.3L825.8 385.6L825.8 388.8L825.2 393.0L823.8 394.8L821.6 398.0L816.8 399.5L813.6 403.6L811.6 404.7M826.5 383.3L826.5 387.2L825.6 388.9L824.7 391.3L823.0 395.9L821.3 398.9L819.0 402.6L815.9 407.2L811.6 409.9M826.5 383.3L825.5 385.7L825.4 388.7L824.5 391.3L824.8 394.7L821.9 400.3L820.8 405.0L818.8 410.3L816.1 415.4M826.5 383.3L824.9 386.1L824.6 388.2L825.2 391.4L823.9 395.5L823.4 400.6L822.5 407.0L822.3 412.0L821.1 418.2M826.5 383.3L825.4 386.8L825.3 389.3L825.1 392.9L823.9 395.2L824.3 399.8L824.9 404.4L824.8 409.2L825.9 414.4" stroke-width="1.5"/>
<ellipse cx="827.7" cy="401" rx="4.5" ry="5" fill="#151515" stroke="none"/>
<path d="M830 396 Q835 395 834 402 Q832 406 829 404" stroke-width="1.2"/>
</g>
<!-- dashes -->
<path d="M617 265 L650 265.6 L650 267 L617 266.2 Z M885 275 L916 276 L916 277.3 L885 276.2 Z" fill="#151515"/>
<!-- dots -->
<g fill="#222">
 <circle cx="679" cy="133" r=".8"/><circle cx="866" cy="138" r=".8"/><circle cx="898" cy="334" r=".8"/><circle cx="1004" cy="253" r=".8"/>
 <circle cx="510" cy="380" r=".8"/><circle cx="1032" cy="377" r=".8"/><circle cx="490" cy="558" r=".8"/><circle cx="646" cy="530" r=".8"/>
 <circle cx="961" cy="572" r=".8"/><circle cx="665" cy="557" r=".7"/><circle cx="890" cy="632" r=".8"/><circle cx="727" cy="176" r=".8"/>
</g>
<!-- origin dot -->
<circle cx="726.4" cy="373.3" r="2.8" fill="#f0a030" stroke="#222" stroke-width=".6"/>
<!-- 3D cursor -->
<circle cx="775.6" cy="559.3" r="10" fill="none" stroke="#ffffff" stroke-width="2"/>
<circle cx="775.6" cy="559.3" r="10" fill="none" stroke="#e02020" stroke-width="2" stroke-dasharray="4 3.85"/>
<path d="M775.6 545 V553 M775.6 566 V574 M761 559.3 H769 M782 559.3 H790" stroke="#111" stroke-width="1"/>
</svg>

<div id="vph"></div>
<!-- editor type dd -->
<div class="dd" style="left:7px;width:30px"></div>
<svg style="left:10px;top:4px" width="28" height="16" viewBox="0 0 28 16">
 <path d="M1.5 8.7 H6.8 M0.8 12.9 H14.5 M5.5 6.5 L4.6 15.5 M12.3 10.5 L12.6 15.5" fill="none" stroke="#d6d6d6" stroke-width="1"/>
 <circle cx="11.5" cy="5.4" r="3.5" fill="#e4e4e4"/>
 <path d="M10 4 Q10.5 3 11.8 2.8" stroke="#555" stroke-width="0.8" fill="none"/>
 <path d="M18.3 11.8 L21.5 15 L24.7 11.8" transform="translate(0,-3.5)" fill="none" stroke="#d6d6d6" stroke-width="1.1"/>
</svg>
<!-- object mode dd -->
<div class="dd" style="left:44px;width:109px"></div>
<svg style="left:47px;top:5px" width="16" height="16" viewBox="0 0 16 16">
 <rect x="4" y="4" width="8" height="8" fill="#e4e4e4"/>
 <path d="M1 4 V1 H4 M12 1 H15 V4 M15 12 V15 H12 M4 15 H1 V12" fill="none" stroke="#bdbdbd" stroke-width="1"/>
</svg>
<div class="t" style="left:69px;top:6px;color:#e6e6e6">Object Mode</div>
<svg style="left:143px;top:11px" width="9" height="6"><path d="M0.8 0.8 L4 4 L7.2 0.8" fill="none" stroke="#d6d6d6" stroke-width="1.1"/></svg>
<div class="t menu" style="left:166px;top:6px">View</div>
<div class="t menu" style="left:207px;top:6px">Select</div>
<div class="t menu" style="left:254px;top:6px">Add</div>
<div class="t menu" style="left:291px;top:6px">Object</div>

<!-- Global -->
<div class="dd" style="left:652px;width:76px"></div>
<svg style="left:655px;top:5px" width="17" height="16" viewBox="0 0 17 16">
 <path d="M2.5 13 V1.5 M0.8 3.2 L2.5 1.3 L4.2 3.2 M2.5 13 H15 M13.2 11.3 L15.2 13 L13.2 14.7 M2.5 13 L11 4.5 M8.3 4.5 H11 V7.2" fill="none" stroke="#dcdcdc" stroke-width="1"/>
 <circle cx="2.5" cy="13" r="1.5" fill="#282828" stroke="#dcdcdc" stroke-width="1"/>
</svg>
<div class="t" style="left:677px;top:6px;color:#e6e6e6">Global</div>
<svg style="left:718px;top:11px" width="9" height="6"><path d="M0.8 0.8 L4 4 L7.2 0.8" fill="none" stroke="#d6d6d6" stroke-width="1.1"/></svg>
<!-- pivot -->
<div class="dd" style="left:735px;width:30px"></div>
<svg style="left:738px;top:6px" width="26" height="15" viewBox="0 0 26 15">
 <circle cx="4.5" cy="10" r="3.8" fill="none" stroke="#dcdcdc" stroke-width="1.1"/>
 <circle cx="4.5" cy="10" r="1.3" fill="#dcdcdc"/>
 <circle cx="10" cy="4.8" r="3.8" fill="none" stroke="#dcdcdc" stroke-width="1.1"/>
 <circle cx="10" cy="4.8" r="1.3" fill="#dcdcdc"/>
 <path d="M16.5 6 L19.5 9 L22.5 6" fill="none" stroke="#d6d6d6" stroke-width="1.1"/>
</svg>
<!-- snap -->
<div class="dd" style="left:771px;width:51px;overflow:hidden"><div class="a" style="left:0;top:0;width:20px;height:18px;background:#3c3c3c"></div></div>
<svg style="left:773px;top:6px" width="48" height="15" viewBox="0 0 48 15">
 <path d="M5 13.5 L3 11 Q1 8 3 5 Q6 1 10.5 3 Q14 5 13.5 9 L11 13 L8.8 11.8 L11 8.5 Q11.5 6 9.5 5 Q7 4 5.5 6.2 Q4.5 8 5.5 9.8 L7 12 Z" fill="none" stroke="#a8a8a8" stroke-width="0.9"/>
 <rect x="20.5" y="2.5" width="3" height="3" fill="#e6e6e6"/><rect x="28" y="2.5" width="3" height="3" fill="#e6e6e6"/>
 <rect x="20.5" y="9.5" width="3" height="3" fill="#e6e6e6"/><rect x="28" y="9.5" width="3" height="3" fill="#e6e6e6"/>
 <path d="M37.5 6 L40.5 9 L43.5 6" fill="none" stroke="#d6d6d6" stroke-width="1.1"/>
</svg>
<!-- proportional -->
<div class="dd" style="left:828px;width:51px;background:#434343;overflow:hidden"><div class="a" style="left:0;top:0;width:19px;height:18px;background:#3c3c3c"></div></div>
<svg style="left:830px;top:6px" width="48" height="15" viewBox="0 0 48 15">
 <circle cx="8" cy="7.5" r="6" fill="none" stroke="#8e8e8e" stroke-width="0.9"/>
 <circle cx="8" cy="7.5" r="1.8" fill="#dcdcdc"/>
 <path d="M20.5 13 Q23.5 13 25.5 6 Q26.5 1.5 27.5 1.5 Q28.5 1.5 29.5 6 Q31.5 13 34.5 13" fill="none" stroke="#7a7a7a" stroke-width="0.9"/>
 <path d="M37.5 6 L40.5 9 L43.5 6" fill="none" stroke="#6a6a6a" stroke-width="1"/>
</svg>

<!-- visibility -->
<div class="dd" style="left:1298px;width:30px"></div>
<div class="dd" style="left:1335px;width:38px;overflow:hidden"><div class="a" style="left:0;top:0;width:18px;height:18px;background:#4772b3"></div></div>
<div class="dd" style="left:1380px;width:38px;overflow:hidden"><div class="a" style="left:0;top:0;width:18px;height:18px;background:#4772b3"></div></div>
<div class="dd" style="left:1425px;width:18px;background:#4a5f84"></div>
<svg style="left:1296px;top:1px" width="150" height="24" viewBox="1296 28 150 24">
 <path d="M1302.8 36.3 Q1308.4 30.8 1314.2 36.3 Q1308.4 41.8 1302.8 36.3 Z" fill="none" stroke="#e8e8e8" stroke-width="1.3"/>
 <circle cx="1308.4" cy="36.4" r="1.9" fill="#e8e8e8"/>
 <path d="M1299.9 38.8 L1307.9 42.3 L1304.5 43.2 L1303.4 46.9 Z" fill="#dcdcdc"/>
 <path d="M1319 39.2 L1322.3 42.5 L1325.6 39.2" fill="none" stroke="#d6d6d6" stroke-width="1.1"/>
 <path d="M1337 35.4 Q1346 36 1348.6 46.8" fill="none" stroke="#f0f0f0" stroke-width="1.1"/>
 <path d="M1340.3 43.5 L1350.6 33.6 M1346.8 33.6 H1350.7 V37.5" fill="none" stroke="#f0f0f0" stroke-width="1.1"/>
 <circle cx="1339.2" cy="44.8" r="1.7" fill="none" stroke="#f0f0f0" stroke-width="1"/>
 <path d="M1360 39.2 L1363.3 42.5 L1366.6 39.2" fill="none" stroke="#d6d6d6" stroke-width="1.1"/>
 <path d="M1384.5 37.8 A4.4 4.4 0 1 0 1391.2 43.6" fill="none" stroke="#f0f0f0" stroke-width="1.2"/>
 <circle cx="1391.1" cy="37.8" r="5.1" fill="#f0f0f0"/>
 <path d="M1388.6 36.5 L1390.8 38.7 M1390.6 41 L1392.2 42.6" stroke="#4772b3" stroke-width="0.9"/>
 <path d="M1405 39.2 L1408.3 42.5 L1411.6 39.2" fill="none" stroke="#d6d6d6" stroke-width="1.1"/>
 <rect x="1427.5" y="36.5" width="9" height="9" fill="none" stroke="#6a82aa" stroke-width="1"/>
 <path d="M1430 36.5 V33.5 H1440 V43 H1436.5" fill="none" stroke="#6a82aa" stroke-width="1"/>
</svg>
<!-- shading -->
<div class="dd" style="left:1449px;width:96px;overflow:hidden;background:#282828;border:1px solid #3c3c3c">
 <div class="a" style="left:0;top:0;width:18px;height:16px;background:#545454"></div>
 <div class="a" style="left:19px;top:0;width:18px;height:16px;background:#545454"></div>
 <div class="a" style="left:38px;top:0;width:18px;height:16px;background:#4772b3"></div>
 <div class="a" style="left:57px;top:0;width:18.5px;height:16px;background:#545454"></div>
</div>
<svg style="left:1446px;top:1px" width="110" height="24" viewBox="1446 28 110 24">
 <circle cx="1458.9" cy="40" r="6.8" fill="none" stroke="#d8d8d8" stroke-width="1"/>
 <path d="M1452.1 40 H1465.7 M1458.2 33.2 V46.8 M1453 37 H1465" fill="none" stroke="#d8d8d8" stroke-width="0.9"/>
 <circle cx="1478" cy="40" r="6.9" fill="#b8b8b8"/>
 <circle cx="1496.9" cy="40" r="6.6" fill="#f4f4f4"/>
 <path d="M1497.6 33.9 A6 6 0 0 1 1503 39.5 L1502 42 L1497.6 40.5 Z" fill="#4772b3"/>
 <path d="M1491 41.8 Q1494 43.5 1496.5 43.2 L1498.5 46 A6 6 0 0 1 1491 41.8 Z" fill="#4772b3"/>
 <circle cx="1496.9" cy="40" r="6.6" fill="none" stroke="#f4f4f4" stroke-width="1"/>
 <circle cx="1516" cy="40" r="6.6" fill="none" stroke="#d0d0d0" stroke-width="1"/>
 <path d="M1512.6 37.8 Q1513.5 35 1516.5 34.5" fill="none" stroke="#b8b8b8" stroke-width="1.5"/>
 <path d="M1517 45.5 L1518 44.5 M1519 44.8 L1520.2 43.5 M1520.8 43.2 L1522 41.8" stroke="#a8a8a8" stroke-width="0.8"/>
 <path d="M1532 40 L1535.2 43.2 L1538.4 40" fill="none" stroke="#e0e0e0" stroke-width="1.2"/>
</svg>
<!-- TOOLBAR (rel to vp) -->
<div class="tb" style="top:33px;height:69px"><div class="a" style="left:0;top:0;width:41px;height:34px;background:#4772b3"></div></div>
<svg style="left:6px;top:33px" width="41" height="69" viewBox="0 0 41 69">
 <rect x="9.5" y="6" width="21.5" height="21.5" fill="none" stroke="#f0a020" stroke-width="1.6" stroke-dasharray="3.2 2.2"/>
 <path d="M17 11 L25.5 18.5 L21 19 L18 23.5 Z" fill="#e8e8e8"/>
 <path d="M36 31.5 L38.5 29 V31.5 Z" fill="#c8d4e8"/>
 <circle cx="20.5" cy="52.5" r="10.8" fill="none" stroke="#f0f0f0" stroke-width="1.6"/>
 <circle cx="20.5" cy="52.5" r="10.8" fill="none" stroke="#c03a3a" stroke-width="1.6" stroke-dasharray="4 4"/>
 <path d="M20.5 45.5 V50 M20.5 55 V59.5 M13.5 52.5 H18 M23 52.5 H27.5" stroke="#8a8a8a" stroke-width="1.4"/>
</svg>
<div class="tb" style="top:108px;height:139px"></div>
<div class="a" style="left:6px;top:142px;width:41px;height:1px;background:#3a3a3a"></div>
<div class="a" style="left:6px;top:177px;width:41px;height:1px;background:#3a3a3a"></div>
<div class="a" style="left:6px;top:212px;width:41px;height:1px;background:#3a3a3a"></div>
<svg style="left:6px;top:108px" width="41" height="139" viewBox="0 0 41 139">
 <!-- move -->
 <path d="M20.3 7 L23 10.5 H17.6 Z M20.3 29 L23 25.5 H17.6 Z M9 18 L12.5 15.3 V20.7 Z M31.6 18 L28.1 15.3 V20.7 Z" fill="#e0e0e0"/>
 <path d="M20.3 10 V14 M20.3 22 V26 M12 18 H16 M24.6 18 H28.6" stroke="#e0e0e0" stroke-width="1.4"/>
 <!-- rotate -->
 <path d="M12 50 A9 9 0 0 1 28.6 50 M28.6 56 A9 9 0 0 1 12 56" fill="none" stroke="#e0e0e0" stroke-width="1.3"/>
 <path d="M20.3 49.5 L23.8 53 L20.3 56.5 L16.8 53 Z" fill="#a8a8a8"/>
 <path d="M9 50.5 H15 L12 55.5 Z M25.6 55.5 H31.6 L28.6 50.5 Z" fill="#e0e0e0"/>
 <!-- scale -->
 <path d="M11 86 V78.4 H28.6 V95.7 H20.5" fill="none" stroke="#cfcfcf" stroke-width="1.2"/>
 <rect x="11" y="86.5" width="9" height="9.2" fill="#e8e8e8"/>
 <path d="M21.5 86 L27 80.5 M23 80.3 H27.3 V84.6" fill="none" stroke="#e0e0e0" stroke-width="1.3"/>
 <path d="M36 101.5 L38.5 99 V101.5 Z" fill="#9a9a9a"/>
 <!-- transform -->
 <circle cx="20.3" cy="122.5" r="9.5" fill="none" stroke="#d6d6d6" stroke-width="1.2" stroke-dasharray="6 3"/>
 <rect x="16" y="118.2" width="8.6" height="8.6" fill="#e8e8e8"/>
 <path d="M20.3 111.5 L22.5 114.5 H18.1 Z M20.3 133.5 L22.5 130.5 H18.1 Z M9.3 122.5 L12.3 120.3 V124.7 Z M31.3 122.5 L28.3 120.3 V124.7 Z" fill="#e0e0e0"/>
</svg>
<div class="tb" style="top:253px;height:69px"></div>
<div class="a" style="left:6px;top:287px;width:41px;height:1px;background:#3a3a3a"></div>
<svg style="left:6px;top:253px" width="41" height="69" viewBox="0 0 41 69">
 <path d="M12 22 L24.5 9.5 L27.5 12.5 L15 25 L11 26 Z" fill="none" stroke="#e6e6e6" stroke-width="1.3"/>
 <path d="M24.5 9.5 L26 8 L29 11 L27.5 12.5" fill="#e6e6e6"/>
 <path d="M12 26.5 Q17 30 22 25.5 T32 25 Q34 26 35 27" fill="none" stroke="#6fd09a" stroke-width="1.3"/>
 <path d="M36 31.5 L38.5 29 V31.5 Z" fill="#9a9a9a"/>
 <path d="M12.8 40 V63.5 H33.5" fill="none" stroke="#e6e6e6" stroke-width="2.4"/>
 <path d="M14.5 62 V48 A14 14 0 0 1 28.5 62 Z" fill="#7ed3a3"/>
 <path d="M14.5 45 A17 17 0 0 1 31.5 62" fill="none" stroke="#7ed3a3" stroke-width="1"/>
 <path d="M11 43 H13 M11 46 H13 M11 49 H13 M11 52 H13 M11 55 H13 M11 58 H13 M16 65 V63 M19 65 V63 M22 65 V63 M25 65 V63 M28 65 V63 M31 65 V63" stroke="#444" stroke-width="0.8"/>
</svg>
<div class="tb" style="top:328px;height:35px"></div>
<svg style="left:6px;top:328px" width="41" height="35" viewBox="0 0 41 35">
 <path d="M11.5 4.5 V12 M7.8 8.2 H15.2" stroke="#7ed3a3" stroke-width="2"/>
 <path d="M13 16.5 H26 V29.5 H13 Z M13 16.5 L18 11.5 H31 V24.5 L26 29.5 M26 16.5 L31 11.5" fill="none" stroke="#7ed3a3" stroke-width="1.2"/>
 <path d="M36 31.5 L38.5 29 V31.5 Z" fill="#9a9a9a"/>
</svg>

<!-- overlay text -->
<div class="vt" style="left:65px;top:35px">User Perspective</div>
<div class="vt" style="left:65px;top:53px">(0) Prop | Bag</div>
<div class="vt" style="left:65px;top:81px">Objects</div><div class="vt" style="left:124px;top:81px">24</div>
<div class="vt" style="left:65px;top:98px">Vertices</div><div class="vt" style="left:124px;top:98px">474</div>
<div class="vt" style="left:65px;top:115px">Edges</div><div class="vt" style="left:124px;top:115px">782</div>
<div class="vt" style="left:65px;top:132px">Faces</div><div class="vt" style="left:124px;top:132px">340</div>
<div class="vt" style="left:65px;top:149px">Triangles</div><div class="vt" style="left:124px;top:149px">746</div>

<!-- nav gizmo -->
<svg style="left:1460px;top:30px" width="90" height="90" viewBox="1460 57 90 90">
 <line x1="1502.9" y1="71" x2="1502.9" y2="103" stroke="#4a8ff0" stroke-width="2"/>
 <line x1="1502.9" y1="103" x2="1510" y2="103" stroke="#e0505a" stroke-width="2"/>
 <line x1="1502.9" y1="103" x2="1495" y2="103" stroke="#80c040" stroke-width="2"/>
 <circle cx="1473.8" cy="102.5" r="7.3" fill="#c08088" fill-opacity=".6" stroke="#e8505e" stroke-width="1.3"/>
 <circle cx="1488.9" cy="103.2" r="7.4" fill="#8cb64c"/>
 <text x="1488.9" y="107.4" text-anchor="middle" font-family="Liberation Sans" font-size="11.5" fill="#1a1a1a">Y</text>
 <circle cx="1517.1" cy="102.5" r="7.6" fill="#94a678" stroke="#84d020" stroke-width="1.4"/>
 <circle cx="1531.8" cy="103.2" r="7.4" fill="#d8505e"/>
 <text x="1531.8" y="107.4" text-anchor="middle" font-family="Liberation Sans" font-size="11.5" fill="#1a1a1a">X</text>
 <circle cx="1502.9" cy="71.1" r="7.6" fill="#4a8ff0"/>
 <text x="1502.9" y="75.3" text-anchor="middle" font-family="Liberation Sans" font-size="11.5" fill="#1a1a1a">Z</text>
 <circle cx="1502.9" cy="135" r="7.3" fill="#86a0c8" fill-opacity=".6" stroke="#4a8ff0" stroke-width="1.3"/>
</svg>
<div class="nav" style="top:117.3px"></div>
<div class="nav" style="top:146.9px"></div>
<div class="nav" style="top:176.5px"></div>
<div class="nav" style="top:207px"></div>
<svg style="left:1516px;top:118px" width="30" height="120" viewBox="0 0 30 120">
 <circle cx="16.5" cy="12.5" r="5" fill="none" stroke="#e6e6e6" stroke-width="1.5"/>
 <path d="M16.5 10 V15 M14 12.5 H19 M12.8 16.2 L7.5 21.5" stroke="#e6e6e6" stroke-width="1.5"/>
 <path d="M9.5 48 Q7 44 8.5 42 L11 44.5 V37 Q12 35.5 13 37 V42 V35 Q14 33.5 15 35 V42 V35.5 Q16 34 17 35.5 V42 V37.5 Q18 36 19 37.5 V46 Q19 50 15.5 51 Q11.5 51 9.5 48 Z" fill="#e6e6e6"/>
 <circle cx="12" cy="66.5" r="2.8" fill="none" stroke="#e6e6e6" stroke-width="1.1"/>
 <circle cx="18" cy="66.5" r="2.8" fill="none" stroke="#e6e6e6" stroke-width="1.1"/>
 <rect x="9.5" y="71" width="9" height="6" fill="none" stroke="#e6e6e6" stroke-width="1.1"/>
 <path d="M19 74 L23 71.5 V76.5 Z" fill="#e6e6e6"/>
 <path d="M8 107 L10.5 97 H19.5 L22 107 Z M9.2 102 H20.8 M13 97 L12.2 107 M16.5 97 L17.5 107 M9.8 99.5 H20.2 M8.6 104.5 H21.4" fill="none" stroke="#e6e6e6" stroke-width="1"/>
</svg>
<!-- area corner collapse arrow -->
<div class="a" style="left:1544px;top:40px;width:9px;height:14px;background:#7e7e7e;border-radius:3px 0 0 3px"></div>
<svg style="left:1545px;top:42px" width="8" height="10"><path d="M5.5 1.5 L2.5 5 L5.5 8.5" fill="none" stroke="#b0b0b0" stroke-width="1"/></svg>
</div>
<div id="ol">
<div class="a" style="left:0.0px;top:46.0px;width:361px;height:20px;background:#2b2b2b"></div>
<div class="a" style="left:0.0px;top:86.0px;width:361px;height:20px;background:#2b2b2b"></div>
<div class="a" style="left:0.0px;top:126.0px;width:361px;height:20px;background:#2b2b2b"></div>
<div class="a" style="left:0.0px;top:166.0px;width:361px;height:20px;background:#2b2b2b"></div>
<div class="a" style="left:0.0px;top:206.0px;width:361px;height:20px;background:#2b2b2b"></div>
<div class="a" style="left:0.0px;top:246.0px;width:361px;height:20px;background:#2b2b2b"></div>
<div class="a" style="left:0.0px;top:286.0px;width:361px;height:20px;background:#2b2b2b"></div>
<div class="a" style="left:0.0px;top:326.0px;width:361px;height:20px;background:#2b2b2b"></div>
<div class="a" style="left:0.0px;top:366.0px;width:361px;height:20px;background:#2b2b2b"></div>
<div class="a" style="left:0.0px;top:406.0px;width:361px;height:20px;background:#2b2b2b"></div>
<div class="a" style="left:0.0px;top:446.0px;width:361px;height:20px;background:#2b2b2b"></div>
<div class="a" style="left:0.0px;top:486.0px;width:361px;height:20px;background:#2b2b2b"></div>
<div class="a" style="left:0.0px;top:526.0px;width:361px;height:20px;background:#2b2b2b"></div>
<div class="a" style="left:0.0px;top:566.0px;width:361px;height:20px;background:#2b2b2b"></div>
<div class="a" style="left:0.0px;top:606.0px;width:361px;height:20px;background:#2b2b2b"></div>
<div class="a" style="left:8.0px;top:2.0px;width:32px;height:20px;border:1px solid #3a3a3a;border-radius:5px"></div>
<svg style="left:12.0px;top:4.0px" width="26" height="16" viewBox="0 0 26 16"><rect x="1.5" y="0.5" width="5" height="2.6" fill="#dcdcdc"/><path d="M4 3 V12.5 H6.5 M4 7.8 H6.5" fill="none" stroke="#dcdcdc" stroke-width="0.9"/><rect x="6.8" y="6.5" width="7" height="2.6" fill="#dcdcdc"/><rect x="6.8" y="11" width="7" height="2.6" fill="#dcdcdc"/><path d="M17 7.5 L19.5 10 L22 7.5" fill="none" stroke="#dcdcdc" stroke-width="1.1"/></svg>
<div class="a" style="left:45.0px;top:2.0px;width:32px;height:20px;border:1px solid #3a3a3a;border-radius:5px"></div>
<svg style="left:49.0px;top:4.0px" width="26" height="16" viewBox="0 0 26 16"><rect x="5.5" y="1" width="8.5" height="8.5" fill="none" stroke="#dcdcdc" stroke-width="1"/><path d="M6.5 9 L8.8 4 L10.5 6.5 L11.5 5 L13.3 9 Z" fill="#dcdcdc"/><circle cx="12" cy="3" r="0.9" fill="#dcdcdc"/><path d="M3.8 3.5 V11.5 H12 M2 5.5 V13.3 H10" fill="none" stroke="#dcdcdc" stroke-width="0.9"/><path d="M17 7.5 L19.5 10 L22 7.5" fill="none" stroke="#dcdcdc" stroke-width="1.1"/></svg>
<div class="a" style="left:110.0px;top:2.0px;width:119px;height:20px;background:#222222;border:1px solid #323232;border-radius:5px"></div>
<svg style="left:114.0px;top:5.0px" width="16" height="15" viewBox="0 0 16 15"><circle cx="9.5" cy="5.5" r="4.3" fill="none" stroke="#e0e0e0" stroke-width="1.2"/><path d="M6.5 8.5 L1 14" stroke="#e0e0e0" stroke-width="1.2"/></svg>
<div class="ot" style="left:136.0px;top:5.8px;color:#6e6e6e">Search</div>
<div class="a" style="left:297.0px;top:2.0px;width:32px;height:20px;border:1px solid #3a3a3a;border-radius:5px"></div>
<svg style="left:300.0px;top:4.0px" width="26" height="16" viewBox="0 0 26 16"><path d="M0.8 1 H13.2 L8.2 7 V14.5 L5.8 12 V7 Z" fill="none" stroke="#e0e0e0" stroke-width="1.1"/><path d="M17 7.5 L19.5 10 L22 7.5" fill="none" stroke="#dcdcdc" stroke-width="1.1"/></svg>
<div class="a" style="left:334.0px;top:2.0px;width:20px;height:20px;background:#3d3d3d;border-radius:5px"></div>
<svg style="left:336.0px;top:4.0px" width="16" height="16" viewBox="0 0 16 16"><rect x="2" y="4" width="10" height="2.2" fill="#dcdcdc"/><rect x="2.5" y="7.3" width="9" height="6" fill="none" stroke="#dcdcdc" stroke-width="1"/><rect x="5.5" y="9" width="3" height="1.2" fill="#dcdcdc"/><circle cx="12" cy="3.5" r="3.2" fill="#3d3d3d" stroke="#e6e6e6" stroke-width="1"/><path d="M12 1.8 V5.2 M10.3 3.5 H13.7" stroke="#e6e6e6" stroke-width="1"/></svg>
<div class="a" style="left:29.0px;top:69.0px;width:1px;height:56px;background:#4a4a4a"></div>
<div class="a" style="left:29.0px;top:149.0px;width:1px;height:76px;background:#4a4a4a"></div>
<div class="a" style="left:49.0px;top:170.0px;width:1px;height:11px;background:#4a4a4a"></div>
<svg style="left:23.0px;top:28.7px" width="14" height="13" viewBox="0 0 14 13"><rect x="0" y="0" width="14" height="3.8" fill="#e0e0e0"/><rect x="0.9" y="5.2" width="12.2" height="7.8" fill="#e0e0e0"/><rect x="5.3" y="6.6" width="3.6" height="1.6" fill="#282828"/></svg>
<div class="ot" style="left:44.0px;top:29.8px;color:#dcdcdc">Scene Collection</div>
<svg style="left:26.0px;top:52.5px" width="10" height="7" viewBox="0 0 10 7"><path d="M0.8 1 L5 5.5 L9.2 1" fill="none" stroke="#b0b0b0" stroke-width="1"/></svg>
<svg style="left:43.0px;top:48.7px" width="14" height="13" viewBox="0 0 14 13"><rect x="0" y="0" width="14" height="3.8" fill="#e0e0e0"/><rect x="0.9" y="5.2" width="12.2" height="7.8" fill="#e0e0e0"/><rect x="5.3" y="6.6" width="3.6" height="1.6" fill="#282828"/></svg>
<div class="ot" style="left:64.0px;top:49.8px;color:#dcdcdc">Avatar</div>
<svg style="left:297.0px;top:50.7px" width="11" height="11" viewBox="0 0 11 11"><rect x="0" y="0" width="10.5" height="10.5" rx="1.5" fill="#e8e8e8"/><path d="M2 5.6 L4.3 7.9 L8.6 2.7" fill="none" stroke="#1c1c1c" stroke-width="1.9"/></svg>
<svg style="left:315.5px;top:51.0px" width="14" height="10" viewBox="0 0 14 10"><path d="M0.8 5 Q7 -1.5 13.2 5 Q7 11.5 0.8 5 Z" fill="none" stroke="#e6e6e6" stroke-width="1.6"/><circle cx="7" cy="5" r="2.2" fill="#e6e6e6"/></svg>
<svg style="left:336.0px;top:50.2px" width="14" height="12" viewBox="0 0 14 12"><path d="M0.5 3 H3.8 L4.8 1 H9.2 L10.2 3 H13 V11 H0.5 Z" fill="none" stroke="#5a5a5a" stroke-width="1"/><path d="M5 5 L8.6 8.6 M8.6 5 L5 8.6" stroke="#5a5a5a" stroke-width="1"/></svg>
<svg style="left:47.5px;top:71.0px" width="7" height="10" viewBox="0 0 7 10"><path d="M1 0.8 L5.5 5 L1 9.2" fill="none" stroke="#808080" stroke-width="1"/></svg>
<svg style="left:63.0px;top:68.7px" width="14" height="13" viewBox="0 0 14 13"><rect x="0" y="0" width="14" height="3.8" fill="#8a8a8a"/><rect x="0.9" y="5.2" width="12.2" height="7.8" fill="#8a8a8a"/><rect x="5.3" y="6.6" width="3.6" height="1.6" fill="#282828"/></svg>
<div class="ot" style="left:84.0px;top:69.8px;color:#8f8f8f">Avatar_ShapeB</div>
<svg style="left:186.0px;top:69.5px" width="14" height="13" viewBox="0 0 14 13"><path d="M1.6 1.6 H12.4 L7 11.6 Z" fill="none" stroke="#9a6a40" stroke-width="2.6" stroke-linejoin="round"/></svg>
<div class="ot" style="left:199.0px;top:74.3px;font-size:10px;line-height:10px;color:#e6e6e6;text-shadow:0 0 1px #000,0 0 1px #000">8</div>
<svg style="left:297.0px;top:70.7px" width="11" height="11" viewBox="0 0 11 11"><rect x="0" y="0" width="10.5" height="10.5" rx="1.5" fill="#e8e8e8"/><path d="M2 5.6 L4.3 7.9 L8.6 2.7" fill="none" stroke="#1c1c1c" stroke-width="1.9"/></svg>
<svg style="left:315.5px;top:71.0px" width="14" height="10" viewBox="0 0 14 10"><path d="M0.8 3 Q7 10 13.2 3" fill="none" stroke="#4a4a4a" stroke-width="1.2"/></svg>
<svg style="left:336.0px;top:70.2px" width="14" height="12" viewBox="0 0 14 12"><path d="M0 2.5 H3.5 L4.5 0.5 H9.5 L10.5 2.5 H13.5 V11.5 H0 Z" fill="#5c5c5c"/><circle cx="6.8" cy="6.8" r="3.4" fill="none" stroke="#282828" stroke-width="1.1"/><circle cx="6.8" cy="6.8" r="1.3" fill="#282828"/></svg>
<svg style="left:63.0px;top:88.7px" width="14" height="13" viewBox="0 0 14 13"><rect x="0" y="0" width="14" height="3.8" fill="#8a8a8a"/><rect x="0.9" y="5.2" width="12.2" height="7.8" fill="#8a8a8a"/><rect x="5.3" y="6.6" width="3.6" height="1.6" fill="#282828"/></svg>
<div class="ot" style="left:84.0px;top:89.8px;color:#8f8f8f">Avatar_ShapeA</div>
<svg style="left:297.0px;top:90.7px" width="11" height="11" viewBox="0 0 11 11"><rect x="0.5" y="0.5" width="9.5" height="9.5" rx="1.5" fill="#282828" stroke="#9a9a9a" stroke-width="1"/></svg>
<svg style="left:315.5px;top:91.0px" width="14" height="10" viewBox="0 0 14 10"><path d="M0.8 3 Q7 10 13.2 3" fill="none" stroke="#4a4a4a" stroke-width="1.2"/></svg>
<svg style="left:336.0px;top:90.2px" width="14" height="12" viewBox="0 0 14 12"><path d="M0 2.5 H3.5 L4.5 0.5 H9.5 L10.5 2.5 H13.5 V11.5 H0 Z" fill="#5c5c5c"/><circle cx="6.8" cy="6.8" r="3.4" fill="none" stroke="#282828" stroke-width="1.1"/><circle cx="6.8" cy="6.8" r="1.3" fill="#282828"/></svg>
<svg style="left:47.5px;top:111.0px" width="7" height="10" viewBox="0 0 7 10"><path d="M1 0.8 L5.5 5 L1 9.2" fill="none" stroke="#b0b0b0" stroke-width="1"/></svg>
<svg style="left:63.0px;top:109.0px" width="15" height="14" viewBox="0 0 15 14"><circle cx="7.5" cy="2" r="2" fill="#dc8c4b"/><path d="M0.8 5.3 H14 M8 4.5 L6.5 9 L3 13.5 M6.5 9 L11 13.5" fill="none" stroke="#dc8c4b" stroke-width="2.4" stroke-linecap="round"/></svg>
<div class="ot" style="left:84.0px;top:109.8px;color:#dcdcdc">Armature</div>
<svg style="left:155.5px;top:109.0px" width="15" height="14" viewBox="0 0 15 14"><path d="M0.8 1.5 H6.5 L3 6.5 Q2 9 5 9.5 H13 M10.5 7 L13.2 9.5 L10.5 12" fill="none" stroke="#c8c8c8" stroke-width="1"/></svg>
<svg style="left:175.5px;top:109.0px" width="15" height="14" viewBox="0 0 15 14"><circle cx="6.5" cy="1.8" r="1.6" fill="#22c896"/><path d="M0.5 0.5 L3.5 3.5 L9 3 L13 6.5 M6.5 3.5 L5 8 L1.5 12.5 M5 8 L9.5 9 L13.5 12.5" fill="none" stroke="#22c896" stroke-width="1.1"/></svg>
<svg style="left:195.5px;top:109.0px" width="15" height="14" viewBox="0 0 15 14"><circle cx="8" cy="1.8" r="1.6" fill="#22c896"/><rect x="0.6" y="2.6" width="3.2" height="3.2" fill="none" stroke="#22c896" stroke-width="1"/><path d="M3.8 4.2 H14 M8 3.5 V8 L4.5 13 M8 8 L11.5 13" fill="none" stroke="#22c896" stroke-width="1.1"/></svg>
<svg style="left:216.0px;top:109.5px" width="14" height="13" viewBox="0 0 14 13"><path d="M1.6 1.6 H12.4 L7 11.6 Z" fill="none" stroke="#dc8c4b" stroke-width="2.6" stroke-linejoin="round"/></svg>
<div class="ot" style="left:229.0px;top:115.3px;font-size:10px;line-height:10px;color:#e6e6e6;text-shadow:0 0 1px #000,0 0 1px #000">8</div>
<svg style="left:315.5px;top:111.0px" width="14" height="10" viewBox="0 0 14 10"><path d="M0.8 5 Q7 -1.5 13.2 5 Q7 11.5 0.8 5 Z" fill="none" stroke="#e6e6e6" stroke-width="1.6"/><circle cx="7" cy="5" r="2.2" fill="#e6e6e6"/></svg>
<svg style="left:336.0px;top:110.2px" width="14" height="12" viewBox="0 0 14 12"><path d="M0 2.5 H3.5 L4.5 0.5 H9.5 L10.5 2.5 H13.5 V11.5 H0 Z" fill="#5c5c5c"/><circle cx="6.8" cy="6.8" r="3.4" fill="none" stroke="#282828" stroke-width="1.1"/><circle cx="6.8" cy="6.8" r="1.3" fill="#282828"/></svg>
<svg style="left:26.0px;top:132.5px" width="10" height="7" viewBox="0 0 10 7"><path d="M0.8 1 L5 5.5 L9.2 1" fill="none" stroke="#b0b0b0" stroke-width="1"/></svg>
<div class="a" style="left:40.5px;top:127.3px;width:19px;height:17.5px;background:#3c3c3c;border:1px solid #575757;border-radius:4px"></div>
<svg style="left:43.0px;top:128.7px" width="14" height="13" viewBox="0 0 14 13"><rect x="0" y="0" width="14" height="3.8" fill="#e0e0e0"/><rect x="0.9" y="5.2" width="12.2" height="7.8" fill="#e0e0e0"/><rect x="5.3" y="6.6" width="3.6" height="1.6" fill="#282828"/></svg>
<div class="ot" style="left:64.0px;top:129.8px;color:#dcdcdc">Prop</div>
<svg style="left:297.0px;top:130.7px" width="11" height="11" viewBox="0 0 11 11"><rect x="0" y="0" width="10.5" height="10.5" rx="1.5" fill="#e8e8e8"/><path d="M2 5.6 L4.3 7.9 L8.6 2.7" fill="none" stroke="#1c1c1c" stroke-width="1.9"/></svg>
<svg style="left:315.5px;top:131.0px" width="14" height="10" viewBox="0 0 14 10"><path d="M0.8 5 Q7 -1.5 13.2 5 Q7 11.5 0.8 5 Z" fill="none" stroke="#e6e6e6" stroke-width="1.6"/><circle cx="7" cy="5" r="2.2" fill="#e6e6e6"/></svg>
<svg style="left:336.0px;top:130.2px" width="14" height="12" viewBox="0 0 14 12"><path d="M0.5 3 H3.8 L4.8 1 H9.2 L10.2 3 H13 V11 H0.5 Z" fill="none" stroke="#5a5a5a" stroke-width="1"/><path d="M5 5 L8.6 8.6 M8.6 5 L5 8.6" stroke="#5a5a5a" stroke-width="1"/></svg>
<svg style="left:46.0px;top:152.5px" width="10" height="7" viewBox="0 0 10 7"><path d="M0.8 1 L5 5.5 L9.2 1" fill="none" stroke="#b0b0b0" stroke-width="1"/></svg>
<svg style="left:63.0px;top:148.7px" width="14" height="13" viewBox="0 0 14 13"><rect x="0" y="0" width="14" height="3.8" fill="#e0e0e0"/><rect x="0.9" y="5.2" width="12.2" height="7.8" fill="#e0e0e0"/><rect x="5.3" y="6.6" width="3.6" height="1.6" fill="#282828"/></svg>
<div class="ot" style="left:84.0px;top:149.8px;color:#dcdcdc">Case</div>
<svg style="left:297.0px;top:150.7px" width="11" height="11" viewBox="0 0 11 11"><rect x="0" y="0" width="10.5" height="10.5" rx="1.5" fill="#e8e8e8"/><path d="M2 5.6 L4.3 7.9 L8.6 2.7" fill="none" stroke="#1c1c1c" stroke-width="1.9"/></svg>
<svg style="left:315.5px;top:151.0px" width="14" height="10" viewBox="0 0 14 10"><path d="M0.8 5 Q7 -1.5 13.2 5 Q7 11.5 0.8 5 Z" fill="none" stroke="#e6e6e6" stroke-width="1.6"/><circle cx="7" cy="5" r="2.2" fill="#e6e6e6"/></svg>
<svg style="left:336.0px;top:150.2px" width="14" height="12" viewBox="0 0 14 12"><path d="M0 2.5 H3.5 L4.5 0.5 H9.5 L10.5 2.5 H13.5 V11.5 H0 Z" fill="#5c5c5c"/><circle cx="6.8" cy="6.8" r="3.4" fill="none" stroke="#282828" stroke-width="1.1"/><circle cx="6.8" cy="6.8" r="1.3" fill="#282828"/></svg>
<svg style="left:67.5px;top:171.0px" width="7" height="10" viewBox="0 0 7 10"><path d="M1 0.8 L5.5 5 L1 9.2" fill="none" stroke="#b0b0b0" stroke-width="1"/></svg>
<div class="a" style="left:80.2px;top:167.2px;width:19.5px;height:17.5px;background:#3c3c3c;border:1px solid #575757;border-radius:4px"></div>
<svg style="left:83.3px;top:169.5px" width="14" height="13" viewBox="0 0 14 13"><path d="M1.6 1.6 H12.4 L7 11.6 Z" fill="none" stroke="#dc8c4b" stroke-width="2.6" stroke-linejoin="round"/></svg>
<div class="ot" style="left:104.0px;top:169.8px;color:#dcdcdc">Bag</div>
<svg style="left:146.5px;top:169.0px" width="15" height="14" viewBox="0 0 15 14"><path d="M1.7 10.5 L7.3 5.0 Q6.0 2.0 8.3 0.5 Q9.5 -0.2 10.9 0.2 L9.1 2.3 Q9.3 4.6 11.6 5.1 L13.5 3.3 Q14.3 5.0 13.0 6.8 Q11.0 8.5 8.8 7.3 L3.3 12.8 Q2.1 13.6 1.4 12.9 Q0.8 11.8 1.7 10.5 Z" fill="none" stroke="#6492e4" stroke-width="1.1" stroke-linejoin="round"/></svg>
<svg style="left:166.5px;top:169.0px" width="15" height="14" viewBox="0 0 15 14"><rect x="0.5" y="3" width="4" height="3.8" fill="#c4c4c4"/><rect x="0.5" y="8" width="4" height="3.8" fill="#c4c4c4"/><rect x="6.0" y="0.5" width="3" height="2.8" fill="#1a1a1a" stroke="#9a9a9a" stroke-width="1"/><rect x="5.5" y="5" width="4" height="3.8" fill="#c4c4c4"/><rect x="5.5" y="10" width="4" height="3.8" fill="#c4c4c4"/><rect x="11.0" y="3.5" width="3" height="2.8" fill="#1a1a1a" stroke="#9a9a9a" stroke-width="1"/><rect x="11.0" y="8.5" width="3" height="2.8" fill="#1a1a1a" stroke="#9a9a9a" stroke-width="1"/></svg>
<svg style="left:186.5px;top:169.0px" width="15" height="14" viewBox="0 0 15 14"><path d="M2.5 2.5 H12.5 L7.5 11.5 Z" fill="none" stroke="#22c896" stroke-width="1.1"/><rect x="0.8" y="0.8" width="3.4" height="3.4" fill="#282828" stroke="#22c896" stroke-width="1"/><rect x="10.8" y="0.8" width="3.4" height="3.4" fill="#282828" stroke="#22c896" stroke-width="1"/><rect x="5.8" y="9.8" width="3.4" height="3.4" fill="#282828" stroke="#22c896" stroke-width="1"/></svg>
<svg style="left:315.5px;top:171.0px" width="14" height="10" viewBox="0 0 14 10"><path d="M0.8 5 Q7 -1.5 13.2 5 Q7 11.5 0.8 5 Z" fill="none" stroke="#e6e6e6" stroke-width="1.6"/><circle cx="7" cy="5" r="2.2" fill="#e6e6e6"/></svg>
<svg style="left:336.0px;top:170.2px" width="14" height="12" viewBox="0 0 14 12"><path d="M0 2.5 H3.5 L4.5 0.5 H9.5 L10.5 2.5 H13.5 V11.5 H0 Z" fill="#5c5c5c"/><circle cx="6.8" cy="6.8" r="3.4" fill="none" stroke="#282828" stroke-width="1.1"/><circle cx="6.8" cy="6.8" r="1.3" fill="#282828"/></svg>
<svg style="left:47.5px;top:191.0px" width="7" height="10" viewBox="0 0 7 10"><path d="M1 0.8 L5.5 5 L1 9.2" fill="none" stroke="#b0b0b0" stroke-width="1"/></svg>
<svg style="left:63.0px;top:188.7px" width="14" height="13" viewBox="0 0 14 13"><rect x="0" y="0" width="14" height="3.8" fill="#e0e0e0"/><rect x="0.9" y="5.2" width="12.2" height="7.8" fill="#e0e0e0"/><rect x="5.3" y="6.6" width="3.6" height="1.6" fill="#282828"/></svg>
<div class="ot" style="left:84.0px;top:189.8px;color:#dcdcdc">Particles_Out</div>
<svg style="left:176.0px;top:189.5px" width="14" height="13" viewBox="0 0 14 13"><path d="M1.6 1.6 H12.4 L7 11.6 Z" fill="none" stroke="#dc8c4b" stroke-width="2.6" stroke-linejoin="round"/></svg>
<div class="ot" style="left:183.0px;top:195.3px;font-size:10px;line-height:10px;color:#e6e6e6;text-shadow:0 0 1px #000,0 0 1px #000">20</div>
<svg style="left:297.0px;top:190.7px" width="11" height="11" viewBox="0 0 11 11"><rect x="0" y="0" width="10.5" height="10.5" rx="1.5" fill="#e8e8e8"/><path d="M2 5.6 L4.3 7.9 L8.6 2.7" fill="none" stroke="#1c1c1c" stroke-width="1.9"/></svg>
<svg style="left:315.5px;top:191.0px" width="14" height="10" viewBox="0 0 14 10"><path d="M0.8 5 Q7 -1.5 13.2 5 Q7 11.5 0.8 5 Z" fill="none" stroke="#e6e6e6" stroke-width="1.6"/><circle cx="7" cy="5" r="2.2" fill="#e6e6e6"/></svg>
<svg style="left:336.0px;top:190.2px" width="14" height="12" viewBox="0 0 14 12"><path d="M0 2.5 H3.5 L4.5 0.5 H9.5 L10.5 2.5 H13.5 V11.5 H0 Z" fill="#5c5c5c"/><circle cx="6.8" cy="6.8" r="3.4" fill="none" stroke="#282828" stroke-width="1.1"/><circle cx="6.8" cy="6.8" r="1.3" fill="#282828"/></svg>
<svg style="left:47.5px;top:211.0px" width="7" height="10" viewBox="0 0 7 10"><path d="M1 0.8 L5.5 5 L1 9.2" fill="none" stroke="#b0b0b0" stroke-width="1"/></svg>
<svg style="left:63.0px;top:209.0px" width="15" height="14" viewBox="0 0 15 14"><circle cx="7.5" cy="2" r="2" fill="#dc8c4b"/><path d="M0.8 5.3 H14 M8 4.5 L6.5 9 L3 13.5 M6.5 9 L11 13.5" fill="none" stroke="#dc8c4b" stroke-width="2.4" stroke-linecap="round"/></svg>
<div class="ot" style="left:84.0px;top:209.8px;color:#dcdcdc">Armature_Prop</div>
<svg style="left:186.0px;top:209.0px" width="15" height="14" viewBox="0 0 15 14"><path d="M0.8 1.5 H6.5 L3 6.5 Q2 9 5 9.5 H13 M10.5 7 L13.2 9.5 L10.5 12" fill="none" stroke="#c8c8c8" stroke-width="1"/></svg>
<svg style="left:206.0px;top:209.0px" width="15" height="14" viewBox="0 0 15 14"><circle cx="6.5" cy="1.8" r="1.6" fill="#22c896"/><path d="M0.5 0.5 L3.5 3.5 L9 3 L13 6.5 M6.5 3.5 L5 8 L1.5 12.5 M5 8 L9.5 9 L13.5 12.5" fill="none" stroke="#22c896" stroke-width="1.1"/></svg>
<svg style="left:225.5px;top:209.0px" width="15" height="14" viewBox="0 0 15 14"><circle cx="8" cy="1.8" r="1.6" fill="#22c896"/><rect x="0.6" y="2.6" width="3.2" height="3.2" fill="none" stroke="#22c896" stroke-width="1"/><path d="M3.8 4.2 H14 M8 3.5 V8 L4.5 13 M8 8 L11.5 13" fill="none" stroke="#22c896" stroke-width="1.1"/></svg>
<div class="a" style="left:243.0px;top:207.0px;width:20px;height:18px;background:#3c3c3c;border:1px solid #575757;border-radius:4px"></div>
<svg style="left:246.0px;top:209.5px" width="14" height="13" viewBox="0 0 14 13"><path d="M1.6 1.6 H12.4 L7 11.6 Z" fill="none" stroke="#dc8c4b" stroke-width="2.6" stroke-linejoin="round"/></svg>
<div class="ot" style="left:252.5px;top:215.3px;font-size:10px;line-height:10px;color:#e6e6e6;text-shadow:0 0 1px #000,0 0 1px #000">22</div>
<svg style="left:315.5px;top:211.0px" width="14" height="10" viewBox="0 0 14 10"><path d="M0.8 5 Q7 -1.5 13.2 5 Q7 11.5 0.8 5 Z" fill="none" stroke="#e6e6e6" stroke-width="1.6"/><circle cx="7" cy="5" r="2.2" fill="#e6e6e6"/></svg>
<svg style="left:336.0px;top:210.2px" width="14" height="12" viewBox="0 0 14 12"><path d="M0 2.5 H3.5 L4.5 0.5 H9.5 L10.5 2.5 H13.5 V11.5 H0 Z" fill="#5c5c5c"/><circle cx="6.8" cy="6.8" r="3.4" fill="none" stroke="#282828" stroke-width="1.1"/><circle cx="6.8" cy="6.8" r="1.3" fill="#282828"/></svg>
<svg style="left:27.0px;top:231.0px" width="7" height="10" viewBox="0 0 7 10"><path d="M1 0.8 L5.5 5 L1 9.2" fill="none" stroke="#808080" stroke-width="1"/></svg>
<svg style="left:43.0px;top:228.7px" width="14" height="13" viewBox="0 0 14 13"><rect x="0" y="0" width="14" height="3.8" fill="#8a8a8a"/><rect x="0.9" y="5.2" width="12.2" height="7.8" fill="#8a8a8a"/><rect x="5.3" y="6.6" width="3.6" height="1.6" fill="#282828"/></svg>
<div class="ot" style="left:64.0px;top:229.8px;color:#8f8f8f">Animation_Area_Reference</div>
<svg style="left:228.0px;top:229.5px" width="14" height="13" viewBox="0 0 14 13"><path d="M1.6 1.6 H12.4 L7 11.6 Z" fill="none" stroke="#9a6a40" stroke-width="2.6" stroke-linejoin="round"/></svg>
<div class="ot" style="left:241.5px;top:235.3px;font-size:10px;line-height:10px;color:#e6e6e6;text-shadow:0 0 1px #000,0 0 1px #000">2</div>
<svg style="left:297.0px;top:230.7px" width="11" height="11" viewBox="0 0 11 11"><rect x="0" y="0" width="10.5" height="10.5" rx="1.5" fill="#e8e8e8"/><path d="M2 5.6 L4.3 7.9 L8.6 2.7" fill="none" stroke="#1c1c1c" stroke-width="1.9"/></svg>
<svg style="left:315.5px;top:231.0px" width="14" height="10" viewBox="0 0 14 10"><path d="M0.8 3 Q7 10 13.2 3" fill="none" stroke="#4a4a4a" stroke-width="1.2"/></svg>
<svg style="left:336.0px;top:230.2px" width="14" height="12" viewBox="0 0 14 12"><path d="M0.5 3 H3.8 L4.8 1 H9.2 L10.2 3 H13 V11 H0.5 Z" fill="none" stroke="#5a5a5a" stroke-width="1"/><path d="M5 5 L8.6 8.6 M8.6 5 L5 8.6" stroke="#5a5a5a" stroke-width="1"/></svg>
<svg style="left:27.0px;top:251.0px" width="7" height="10" viewBox="0 0 7 10"><path d="M1 0.8 L5.5 5 L1 9.2" fill="none" stroke="#808080" stroke-width="1"/></svg>
<svg style="left:43.0px;top:248.7px" width="14" height="13" viewBox="0 0 14 13"><rect x="0" y="0" width="14" height="3.8" fill="#8a8a8a"/><rect x="0.9" y="5.2" width="12.2" height="7.8" fill="#8a8a8a"/><rect x="5.3" y="6.6" width="3.6" height="1.6" fill="#282828"/></svg>
<div class="ot" style="left:64.0px;top:249.8px;color:#8f8f8f">Back</div>
<svg style="left:112.0px;top:248.7px" width="14" height="13" viewBox="0 0 14 13"><rect x="0" y="0" width="14" height="3.8" fill="#8a8a8a"/><rect x="0.9" y="5.2" width="12.2" height="7.8" fill="#8a8a8a"/><rect x="5.3" y="6.6" width="3.6" height="1.6" fill="#282828"/></svg>
<div class="ot" style="left:125.5px;top:255.3px;font-size:10px;line-height:10px;color:#e6e6e6;text-shadow:0 0 1px #000,0 0 1px #000">3</div>
<svg style="left:297.0px;top:250.7px" width="11" height="11" viewBox="0 0 11 11"><rect x="0.5" y="0.5" width="9.5" height="9.5" rx="1.5" fill="#282828" stroke="#9a9a9a" stroke-width="1"/></svg>
<svg style="left:315.5px;top:251.0px" width="14" height="10" viewBox="0 0 14 10"><path d="M0.8 5 Q7 -1.5 13.2 5 Q7 11.5 0.8 5 Z" fill="none" stroke="#5a5a5a" stroke-width="1.6"/><circle cx="7" cy="5" r="2.2" fill="#5a5a5a"/></svg>
<svg style="left:336.0px;top:250.2px" width="14" height="12" viewBox="0 0 14 12"><path d="M0.5 3 H3.8 L4.8 1 H9.2 L10.2 3 H13 V11 H0.5 Z" fill="none" stroke="#5a5a5a" stroke-width="1"/><path d="M5 5 L8.6 8.6 M8.6 5 L5 8.6" stroke="#5a5a5a" stroke-width="1"/></svg>
<svg style="left:27.0px;top:271.0px" width="7" height="10" viewBox="0 0 7 10"><path d="M1 0.8 L5.5 5 L1 9.2" fill="none" stroke="#808080" stroke-width="1"/></svg>
<svg style="left:43.0px;top:269.5px" width="14" height="13" viewBox="0 0 14 13"><path d="M1.6 1.6 H12.4 L7 11.6 Z" fill="none" stroke="#9a6a40" stroke-width="2.6" stroke-linejoin="round"/></svg>
<div class="ot" style="left:64.0px;top:269.8px;color:#8f8f8f">Cube</div>
<svg style="left:115.0px;top:269.0px" width="15" height="14" viewBox="0 0 15 14"><path d="M2.5 2.5 H12.5 L7.5 11.5 Z" fill="none" stroke="#1d8f6c" stroke-width="1.1"/><rect x="0.8" y="0.8" width="3.4" height="3.4" fill="#282828" stroke="#1d8f6c" stroke-width="1"/><rect x="10.8" y="0.8" width="3.4" height="3.4" fill="#282828" stroke="#1d8f6c" stroke-width="1"/><rect x="5.8" y="9.8" width="3.4" height="3.4" fill="#282828" stroke="#1d8f6c" stroke-width="1"/></svg>
<svg style="left:315.5px;top:271.0px" width="14" height="10" viewBox="0 0 14 10"><path d="M0.8 3 Q7 10 13.2 3" fill="none" stroke="#e6e6e6" stroke-width="1.2"/></svg>
<svg style="left:336.0px;top:270.2px" width="14" height="12" viewBox="0 0 14 12"><path d="M0.5 3 H3.8 L4.8 1 H9.2 L10.2 3 H13 V11 H0.5 Z" fill="none" stroke="#e0e0e0" stroke-width="1.1"/><path d="M5 5 L8.6 8.6 M8.6 5 L5 8.6" stroke="#e0e0e0" stroke-width="1.1"/></svg>
<svg style="left:27.0px;top:291.0px" width="7" height="10" viewBox="0 0 7 10"><path d="M1 0.8 L5.5 5 L1 9.2" fill="none" stroke="#808080" stroke-width="1"/></svg>
<svg style="left:43.0px;top:289.5px" width="14" height="13" viewBox="0 0 14 13"><path d="M1.6 1.6 H12.4 L7 11.6 Z" fill="none" stroke="#9a6a40" stroke-width="2.6" stroke-linejoin="round"/></svg>
<div class="ot" style="left:64.0px;top:289.8px;color:#8f8f8f">Particle_Emitter</div>
<svg style="left:169.0px;top:289.0px" width="15" height="14" viewBox="0 0 15 14"><path d="M1.7 10.5 L7.3 5.0 Q6.0 2.0 8.3 0.5 Q9.5 -0.2 10.9 0.2 L9.1 2.3 Q9.3 4.6 11.6 5.1 L13.5 3.3 Q14.3 5.0 13.0 6.8 Q11.0 8.5 8.8 7.3 L3.3 12.8 Q2.1 13.6 1.4 12.9 Q0.8 11.8 1.7 10.5 Z" fill="none" stroke="#4a64a0" stroke-width="1.1" stroke-linejoin="round"/></svg>
<svg style="left:189.0px;top:289.0px" width="15" height="14" viewBox="0 0 15 14"><path d="M2.5 2.5 H12.5 L7.5 11.5 Z" fill="none" stroke="#1d8f6c" stroke-width="1.1"/><rect x="0.8" y="0.8" width="3.4" height="3.4" fill="#282828" stroke="#1d8f6c" stroke-width="1"/><rect x="10.8" y="0.8" width="3.4" height="3.4" fill="#282828" stroke="#1d8f6c" stroke-width="1"/><rect x="5.8" y="9.8" width="3.4" height="3.4" fill="#282828" stroke="#1d8f6c" stroke-width="1"/></svg>
<svg style="left:315.5px;top:291.0px" width="14" height="10" viewBox="0 0 14 10"><path d="M0.8 3 Q7 10 13.2 3" fill="none" stroke="#e6e6e6" stroke-width="1.2"/></svg>
<svg style="left:336.0px;top:290.2px" width="14" height="12" viewBox="0 0 14 12"><path d="M0.5 3 H3.8 L4.8 1 H9.2 L10.2 3 H13 V11 H0.5 Z" fill="none" stroke="#e0e0e0" stroke-width="1.1"/><path d="M5 5 L8.6 8.6 M8.6 5 L5 8.6" stroke="#e0e0e0" stroke-width="1.1"/></svg>
<svg style="left:27.0px;top:311.0px" width="7" height="10" viewBox="0 0 7 10"><path d="M1 0.8 L5.5 5 L1 9.2" fill="none" stroke="#808080" stroke-width="1"/></svg>
<svg style="left:43.0px;top:309.5px" width="14" height="13" viewBox="0 0 14 13"><path d="M1.6 1.6 H12.4 L7 11.6 Z" fill="none" stroke="#9a6a40" stroke-width="2.6" stroke-linejoin="round"/></svg>
<div class="ot" style="left:64.0px;top:309.8px;color:#8f8f8f">Plane</div>
<svg style="left:115.0px;top:309.0px" width="15" height="14" viewBox="0 0 15 14"><path d="M2.5 2.5 H12.5 L7.5 11.5 Z" fill="none" stroke="#1d8f6c" stroke-width="1.1"/><rect x="0.8" y="0.8" width="3.4" height="3.4" fill="#282828" stroke="#1d8f6c" stroke-width="1"/><rect x="10.8" y="0.8" width="3.4" height="3.4" fill="#282828" stroke="#1d8f6c" stroke-width="1"/><rect x="5.8" y="9.8" width="3.4" height="3.4" fill="#282828" stroke="#1d8f6c" stroke-width="1"/></svg>
<svg style="left:315.5px;top:311.0px" width="14" height="10" viewBox="0 0 14 10"><path d="M0.8 3 Q7 10 13.2 3" fill="none" stroke="#e6e6e6" stroke-width="1.2"/></svg>
<svg style="left:336.0px;top:310.2px" width="14" height="12" viewBox="0 0 14 12"><path d="M0.5 3 H3.8 L4.8 1 H9.2 L10.2 3 H13 V11 H0.5 Z" fill="none" stroke="#e0e0e0" stroke-width="1.1"/><path d="M5 5 L8.6 8.6 M8.6 5 L5 8.6" stroke="#e0e0e0" stroke-width="1.1"/></svg>
<svg style="left:43.0px;top:329.0px" width="15" height="14" viewBox="0 0 15 14"><path d="M3.0 0.5 Q1.0 2.5 3.0 5 Q4.5 7 2.5 9.5 Q1.0 11.5 2.5 13.5" fill="none" stroke="#9a6a40" stroke-width="1.3"/><path d="M7.5 0.5 Q5.5 2.5 7.5 5 Q9 7 7 9.5 Q5.5 11.5 7 13.5" fill="none" stroke="#9a6a40" stroke-width="1.3"/><path d="M12.0 0.5 Q10.0 2.5 12.0 5 Q13.5 7 11.5 9.5 Q10.0 11.5 11.5 13.5" fill="none" stroke="#9a6a40" stroke-width="1.3"/></svg>
<div class="ot" style="left:64.0px;top:329.8px;color:#8f8f8f">Vortex</div>
<svg style="left:315.5px;top:331.0px" width="14" height="10" viewBox="0 0 14 10"><path d="M0.8 3 Q7 10 13.2 3" fill="none" stroke="#e6e6e6" stroke-width="1.2"/></svg>
<svg style="left:336.0px;top:330.2px" width="14" height="12" viewBox="0 0 14 12"><path d="M0.5 3 H3.8 L4.8 1 H9.2 L10.2 3 H13 V11 H0.5 Z" fill="none" stroke="#e0e0e0" stroke-width="1.1"/><path d="M5 5 L8.6 8.6 M8.6 5 L5 8.6" stroke="#e0e0e0" stroke-width="1.1"/></svg>
</div></body></html>
